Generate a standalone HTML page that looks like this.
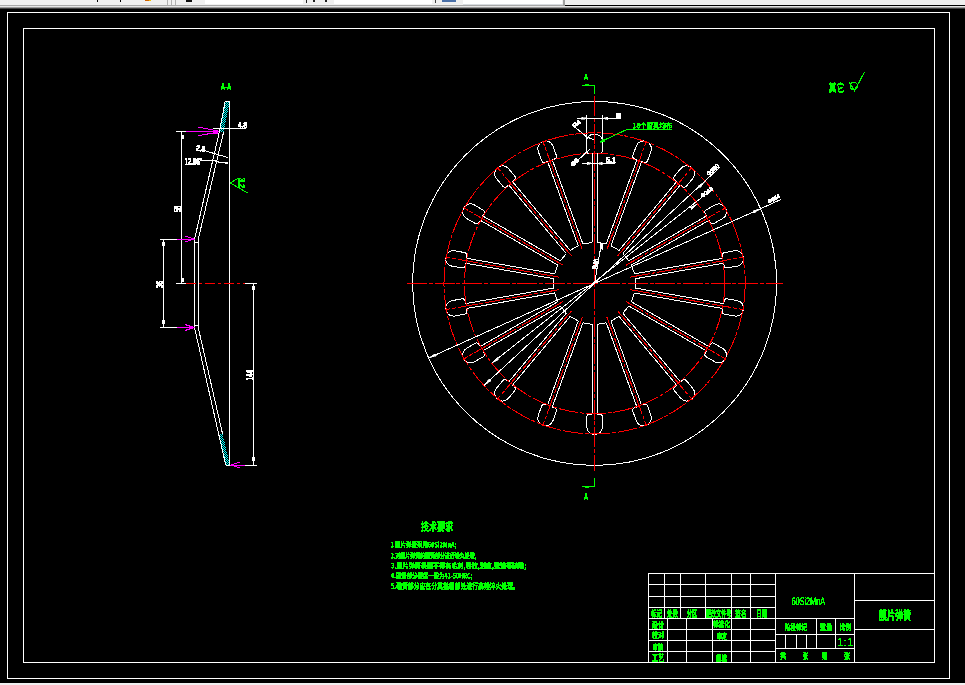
<!DOCTYPE html><html><head><meta charset="utf-8"><style>html,body{margin:0;padding:0;background:#000;width:965px;height:685px;overflow:hidden}</style></head><body><svg width="965" height="685" viewBox="0 0 965 685" style="display:block;will-change:transform" shape-rendering="crispEdges">
<rect x="0" y="0" width="965" height="685" fill="#000"/>
<rect x="0" y="0" width="965" height="5" fill="#f0f0f0"/>
<rect x="0" y="5" width="565" height="1" fill="#a8a8a8"/>
<rect x="0" y="6" width="965" height="1" fill="#e6e6e6"/>
<rect x="0" y="7" width="965" height="1" fill="#9a9a9a"/>
<rect x="0" y="8" width="965" height="1" fill="#404040"/>
<rect x="205" y="0" width="98" height="4" fill="#ffffff"/>
<rect x="334" y="0" width="98" height="4" fill="#ffffff"/>
<rect x="463" y="0" width="99" height="4" fill="#ffffff"/>
<rect x="563" y="0" width="2" height="6" fill="#a0a0a0"/>
<rect x="463" y="4" width="100" height="1" fill="#d8dce0"/>
<rect x="97" y="0" width="1" height="2" fill="#000"/>
<rect x="120" y="0" width="1" height="2" fill="#000"/>
<rect x="145" y="0" width="4" height="1" fill="#d06000"/>
<rect x="149" y="0" width="2" height="1" fill="#f0c000"/>
<rect x="167" y="0" width="1" height="5" fill="#b0b0b0"/>
<rect x="171" y="0" width="1" height="5" fill="#b0b0b0"/>
<rect x="175" y="0" width="1" height="5" fill="#b0b0b0"/>
<rect x="186" y="0" width="6" height="2" fill="#101010"/>
<rect x="306" y="0" width="1" height="3" fill="#202020"/>
<rect x="313" y="0" width="2" height="2" fill="#202020"/>
<rect x="325" y="0" width="2" height="2" fill="#202020"/>
<rect x="435" y="0" width="1" height="3" fill="#404040"/>
<rect x="442" y="0" width="14" height="2" fill="#4a70a8"/>
<rect x="0" y="683" width="965" height="2" fill="#f0f0f0"/>
<rect x="7.5" y="12.5" width="942" height="666" fill="none" stroke="#fff" stroke-width="1"/>
<rect x="23.5" y="28.5" width="911" height="634" fill="none" stroke="#fff" stroke-width="1"/>
<line x1="592.1" y1="242.4" x2="592.1" y2="152.8" stroke="#fff" stroke-width="1" />
<line x1="597.1" y1="242.4" x2="597.1" y2="152.8" stroke="#fff" stroke-width="1" />
<line x1="597.1" y1="242.4" x2="606.27" y2="244.02" stroke="#fff" stroke-width="1" />
<line x1="606.27" y1="244.02" x2="636.92" y2="159.82" stroke="#fff" stroke-width="1" />
<line x1="610.97" y1="245.73" x2="641.62" y2="161.53" stroke="#fff" stroke-width="1" />
<line x1="610.97" y1="245.73" x2="619.04" y2="250.39" stroke="#fff" stroke-width="1" />
<path d="M636.92,159.82 L634.76,159.03 A3,3 0 0 1 632.96,155.19 L636.35,145.89 A7.5,7.5 0 0 1 645.96,141.4 L646.53,141.61 A7.5,7.5 0 0 1 651.01,151.22 L647.62,160.52 A3,3 0 0 1 643.78,162.32 L641.62,161.53" fill="none" stroke="#fff" stroke-width="1"/>
<line x1="619.04" y1="250.39" x2="676.63" y2="181.75" stroke="#fff" stroke-width="1" />
<line x1="622.87" y1="253.6" x2="680.46" y2="184.96" stroke="#fff" stroke-width="1" />
<line x1="622.87" y1="253.6" x2="628.86" y2="260.73" stroke="#fff" stroke-width="1" />
<path d="M676.63,181.75 L674.87,180.27 A3,3 0 0 1 674.5,176.04 L680.86,168.46 A7.5,7.5 0 0 1 691.43,167.53 L691.89,167.92 A7.5,7.5 0 0 1 692.82,178.49 L686.45,186.07 A3,3 0 0 1 682.23,186.44 L680.46,184.96" fill="none" stroke="#fff" stroke-width="1"/>
<line x1="628.86" y1="260.73" x2="706.45" y2="215.93" stroke="#fff" stroke-width="1" />
<line x1="631.36" y1="265.07" x2="708.95" y2="220.27" stroke="#fff" stroke-width="1" />
<line x1="631.36" y1="265.07" x2="634.54" y2="273.82" stroke="#fff" stroke-width="1" />
<path d="M706.45,215.93 L705.3,213.94 A3,3 0 0 1 706.4,209.85 L714.97,204.9 A7.5,7.5 0 0 1 725.22,207.64 L725.52,208.16 A7.5,7.5 0 0 1 722.77,218.4 L714.2,223.35 A3,3 0 0 1 710.1,222.26 L708.95,220.27" fill="none" stroke="#fff" stroke-width="1"/>
<line x1="634.54" y1="273.82" x2="722.78" y2="258.26" stroke="#fff" stroke-width="1" />
<line x1="635.41" y1="278.74" x2="723.65" y2="263.18" stroke="#fff" stroke-width="1" />
<line x1="635.41" y1="278.74" x2="635.41" y2="288.06" stroke="#fff" stroke-width="1" />
<path d="M722.78,258.26 L722.38,255.99 A3,3 0 0 1 724.82,252.52 L734.57,250.8 A7.5,7.5 0 0 1 743.25,256.88 L743.36,257.47 A7.5,7.5 0 0 1 737.27,266.16 L727.52,267.88 A3,3 0 0 1 724.05,265.45 L723.65,263.18" fill="none" stroke="#fff" stroke-width="1"/>
<line x1="635.41" y1="288.06" x2="723.65" y2="303.62" stroke="#fff" stroke-width="1" />
<line x1="634.54" y1="292.98" x2="722.78" y2="308.54" stroke="#fff" stroke-width="1" />
<line x1="634.54" y1="292.98" x2="631.36" y2="301.73" stroke="#fff" stroke-width="1" />
<path d="M723.65,303.62 L724.05,301.35 A3,3 0 0 1 727.52,298.92 L737.27,300.64 A7.5,7.5 0 0 1 743.36,309.33 L743.25,309.92 A7.5,7.5 0 0 1 734.57,316 L724.82,314.28 A3,3 0 0 1 722.38,310.81 L722.78,308.54" fill="none" stroke="#fff" stroke-width="1"/>
<line x1="631.36" y1="301.73" x2="708.95" y2="346.53" stroke="#fff" stroke-width="1" />
<line x1="628.86" y1="306.07" x2="706.45" y2="350.87" stroke="#fff" stroke-width="1" />
<line x1="628.86" y1="306.07" x2="622.87" y2="313.2" stroke="#fff" stroke-width="1" />
<path d="M708.95,346.53 L710.1,344.54 A3,3 0 0 1 714.2,343.45 L722.77,348.4 A7.5,7.5 0 0 1 725.52,358.64 L725.22,359.16 A7.5,7.5 0 0 1 714.97,361.9 L706.4,356.95 A3,3 0 0 1 705.3,352.86 L706.45,350.87" fill="none" stroke="#fff" stroke-width="1"/>
<line x1="622.87" y1="313.2" x2="680.46" y2="381.84" stroke="#fff" stroke-width="1" />
<line x1="619.04" y1="316.41" x2="676.63" y2="385.05" stroke="#fff" stroke-width="1" />
<line x1="619.04" y1="316.41" x2="610.97" y2="321.07" stroke="#fff" stroke-width="1" />
<path d="M680.46,381.84 L682.23,380.36 A3,3 0 0 1 686.45,380.73 L692.82,388.31 A7.5,7.5 0 0 1 691.89,398.88 L691.43,399.27 A7.5,7.5 0 0 1 680.86,398.34 L674.5,390.76 A3,3 0 0 1 674.87,386.53 L676.63,385.05" fill="none" stroke="#fff" stroke-width="1"/>
<line x1="610.97" y1="321.07" x2="641.62" y2="405.27" stroke="#fff" stroke-width="1" />
<line x1="606.27" y1="322.78" x2="636.92" y2="406.98" stroke="#fff" stroke-width="1" />
<line x1="606.27" y1="322.78" x2="597.1" y2="324.4" stroke="#fff" stroke-width="1" />
<path d="M641.62,405.27 L643.78,404.48 A3,3 0 0 1 647.62,406.28 L651.01,415.58 A7.5,7.5 0 0 1 646.53,425.19 L645.96,425.4 A7.5,7.5 0 0 1 636.35,420.91 L632.96,411.61 A3,3 0 0 1 634.76,407.77 L636.92,406.98" fill="none" stroke="#fff" stroke-width="1"/>
<line x1="597.1" y1="324.4" x2="597.1" y2="414" stroke="#fff" stroke-width="1" />
<line x1="592.1" y1="324.4" x2="592.1" y2="414" stroke="#fff" stroke-width="1" />
<line x1="592.1" y1="324.4" x2="582.93" y2="322.78" stroke="#fff" stroke-width="1" />
<path d="M597.1,414 L599.4,414 A3,3 0 0 1 602.4,417 L602.4,426.9 A7.5,7.5 0 0 1 594.9,434.4 L594.3,434.4 A7.5,7.5 0 0 1 586.8,426.9 L586.8,417 A3,3 0 0 1 589.8,414 L592.1,414" fill="none" stroke="#fff" stroke-width="1"/>
<line x1="582.93" y1="322.78" x2="552.28" y2="406.98" stroke="#fff" stroke-width="1" />
<line x1="578.23" y1="321.07" x2="547.58" y2="405.27" stroke="#fff" stroke-width="1" />
<line x1="578.23" y1="321.07" x2="570.16" y2="316.41" stroke="#fff" stroke-width="1" />
<path d="M552.28,406.98 L554.44,407.77 A3,3 0 0 1 556.24,411.61 L552.85,420.91 A7.5,7.5 0 0 1 543.24,425.4 L542.67,425.19 A7.5,7.5 0 0 1 538.19,415.58 L541.58,406.28 A3,3 0 0 1 545.42,404.48 L547.58,405.27" fill="none" stroke="#fff" stroke-width="1"/>
<line x1="570.16" y1="316.41" x2="512.57" y2="385.05" stroke="#fff" stroke-width="1" />
<line x1="566.33" y1="313.2" x2="508.74" y2="381.84" stroke="#fff" stroke-width="1" />
<line x1="566.33" y1="313.2" x2="560.34" y2="306.07" stroke="#fff" stroke-width="1" />
<path d="M512.57,385.05 L514.33,386.53 A3,3 0 0 1 514.7,390.76 L508.34,398.34 A7.5,7.5 0 0 1 497.77,399.27 L497.31,398.88 A7.5,7.5 0 0 1 496.38,388.31 L502.75,380.73 A3,3 0 0 1 506.97,380.36 L508.74,381.84" fill="none" stroke="#fff" stroke-width="1"/>
<line x1="560.34" y1="306.07" x2="482.75" y2="350.87" stroke="#fff" stroke-width="1" />
<line x1="557.84" y1="301.73" x2="480.25" y2="346.53" stroke="#fff" stroke-width="1" />
<line x1="557.84" y1="301.73" x2="554.66" y2="292.98" stroke="#fff" stroke-width="1" />
<path d="M482.75,350.87 L483.9,352.86 A3,3 0 0 1 482.8,356.95 L474.23,361.9 A7.5,7.5 0 0 1 463.98,359.16 L463.68,358.64 A7.5,7.5 0 0 1 466.43,348.4 L475,343.45 A3,3 0 0 1 479.1,344.54 L480.25,346.53" fill="none" stroke="#fff" stroke-width="1"/>
<line x1="554.66" y1="292.98" x2="466.42" y2="308.54" stroke="#fff" stroke-width="1" />
<line x1="553.79" y1="288.06" x2="465.55" y2="303.62" stroke="#fff" stroke-width="1" />
<line x1="553.79" y1="288.06" x2="553.79" y2="278.74" stroke="#fff" stroke-width="1" />
<path d="M466.42,308.54 L466.82,310.81 A3,3 0 0 1 464.38,314.28 L454.63,316 A7.5,7.5 0 0 1 445.95,309.92 L445.84,309.33 A7.5,7.5 0 0 1 451.93,300.64 L461.68,298.92 A3,3 0 0 1 465.15,301.35 L465.55,303.62" fill="none" stroke="#fff" stroke-width="1"/>
<line x1="553.79" y1="278.74" x2="465.55" y2="263.18" stroke="#fff" stroke-width="1" />
<line x1="554.66" y1="273.82" x2="466.42" y2="258.26" stroke="#fff" stroke-width="1" />
<line x1="554.66" y1="273.82" x2="557.84" y2="265.07" stroke="#fff" stroke-width="1" />
<path d="M465.55,263.18 L465.15,265.45 A3,3 0 0 1 461.68,267.88 L451.93,266.16 A7.5,7.5 0 0 1 445.84,257.47 L445.95,256.88 A7.5,7.5 0 0 1 454.63,250.8 L464.38,252.52 A3,3 0 0 1 466.82,255.99 L466.42,258.26" fill="none" stroke="#fff" stroke-width="1"/>
<line x1="557.84" y1="265.07" x2="480.25" y2="220.27" stroke="#fff" stroke-width="1" />
<line x1="560.34" y1="260.73" x2="482.75" y2="215.93" stroke="#fff" stroke-width="1" />
<line x1="560.34" y1="260.73" x2="566.33" y2="253.6" stroke="#fff" stroke-width="1" />
<path d="M480.25,220.27 L479.1,222.26 A3,3 0 0 1 475,223.35 L466.43,218.4 A7.5,7.5 0 0 1 463.68,208.16 L463.98,207.64 A7.5,7.5 0 0 1 474.23,204.9 L482.8,209.85 A3,3 0 0 1 483.9,213.94 L482.75,215.93" fill="none" stroke="#fff" stroke-width="1"/>
<line x1="566.33" y1="253.6" x2="508.74" y2="184.96" stroke="#fff" stroke-width="1" />
<line x1="570.16" y1="250.39" x2="512.57" y2="181.75" stroke="#fff" stroke-width="1" />
<line x1="570.16" y1="250.39" x2="578.23" y2="245.73" stroke="#fff" stroke-width="1" />
<path d="M508.74,184.96 L506.97,186.44 A3,3 0 0 1 502.75,186.07 L496.38,178.49 A7.5,7.5 0 0 1 497.31,167.92 L497.77,167.53 A7.5,7.5 0 0 1 508.34,168.46 L514.7,176.04 A3,3 0 0 1 514.33,180.27 L512.57,181.75" fill="none" stroke="#fff" stroke-width="1"/>
<line x1="578.23" y1="245.73" x2="547.58" y2="161.53" stroke="#fff" stroke-width="1" />
<line x1="582.93" y1="244.02" x2="552.28" y2="159.82" stroke="#fff" stroke-width="1" />
<line x1="582.93" y1="244.02" x2="592.1" y2="242.4" stroke="#fff" stroke-width="1" />
<path d="M547.58,161.53 L545.42,162.32 A3,3 0 0 1 541.58,160.52 L538.19,151.22 A7.5,7.5 0 0 1 542.67,141.61 L543.24,141.4 A7.5,7.5 0 0 1 552.85,145.89 L556.24,155.19 A3,3 0 0 1 554.44,159.03 L552.28,159.82" fill="none" stroke="#fff" stroke-width="1"/>
<path d="M592.5,153.4 L588.5,153.4 Q586.5,153.4 586.5,151 L586.5,133 M602.5,133 L602.5,150 Q602.5,153.4 599.5,153.4 L597.4,153.4" fill="none" stroke="#fff"/>
<path d="M586.8,139 A8.5,8.5 0 0 1 602.2,139" fill="none" stroke="#fff"/>
<circle cx="594.6" cy="283.4" r="182" fill="none" stroke="#fff" stroke-width="1"/>
<circle cx="594.6" cy="283.4" r="150.6" fill="none" stroke="#ff0000" stroke-width="1" stroke-dasharray="20 1.8 4 1.8"/>
<circle cx="594.6" cy="283.4" r="130.2" fill="none" stroke="#ff0000" stroke-width="1" stroke-dasharray="20 1.8 4 1.8"/>
<line x1="407" y1="283.4" x2="783" y2="283.4" stroke="#ff0000" stroke-width="1" stroke-dasharray="20 1.8 4 1.8"/>
<line x1="594.6" y1="96" x2="594.6" y2="470.6" stroke="#ff0000" stroke-width="1" stroke-dasharray="20 1.8 4 1.8"/>
<line x1="606.91" y1="249.57" x2="646.59" y2="140.57" stroke="#ff0000" stroke-width="1" stroke-dasharray="20 1.8 4 1.8"/>
<line x1="617.74" y1="255.82" x2="692.3" y2="166.96" stroke="#ff0000" stroke-width="1" stroke-dasharray="20 1.8 4 1.8"/>
<line x1="625.78" y1="265.4" x2="726.24" y2="207.4" stroke="#ff0000" stroke-width="1" stroke-dasharray="20 1.8 4 1.8"/>
<line x1="630.05" y1="277.15" x2="744.29" y2="257.01" stroke="#ff0000" stroke-width="1" stroke-dasharray="20 1.8 4 1.8"/>
<line x1="630.05" y1="289.65" x2="744.29" y2="309.79" stroke="#ff0000" stroke-width="1" stroke-dasharray="20 1.8 4 1.8"/>
<line x1="625.78" y1="301.4" x2="726.24" y2="359.4" stroke="#ff0000" stroke-width="1" stroke-dasharray="20 1.8 4 1.8"/>
<line x1="617.74" y1="310.98" x2="692.3" y2="399.84" stroke="#ff0000" stroke-width="1" stroke-dasharray="20 1.8 4 1.8"/>
<line x1="606.91" y1="317.23" x2="646.59" y2="426.23" stroke="#ff0000" stroke-width="1" stroke-dasharray="20 1.8 4 1.8"/>
<line x1="582.29" y1="317.23" x2="542.61" y2="426.23" stroke="#ff0000" stroke-width="1" stroke-dasharray="20 1.8 4 1.8"/>
<line x1="571.46" y1="310.98" x2="496.9" y2="399.84" stroke="#ff0000" stroke-width="1" stroke-dasharray="20 1.8 4 1.8"/>
<line x1="563.42" y1="301.4" x2="462.96" y2="359.4" stroke="#ff0000" stroke-width="1" stroke-dasharray="20 1.8 4 1.8"/>
<line x1="559.15" y1="289.65" x2="444.91" y2="309.79" stroke="#ff0000" stroke-width="1" stroke-dasharray="20 1.8 4 1.8"/>
<line x1="559.15" y1="277.15" x2="444.91" y2="257.01" stroke="#ff0000" stroke-width="1" stroke-dasharray="20 1.8 4 1.8"/>
<line x1="563.42" y1="265.4" x2="462.96" y2="207.4" stroke="#ff0000" stroke-width="1" stroke-dasharray="20 1.8 4 1.8"/>
<line x1="571.46" y1="255.82" x2="496.9" y2="166.96" stroke="#ff0000" stroke-width="1" stroke-dasharray="20 1.8 4 1.8"/>
<line x1="582.29" y1="249.57" x2="542.61" y2="140.57" stroke="#ff0000" stroke-width="1" stroke-dasharray="20 1.8 4 1.8"/>
<line x1="428.59" y1="358.01" x2="780.9" y2="199.5" stroke="#fff" stroke-width="1" />
<polygon points="760.61,208.79 753.84,213.26 752.78,210.89" stroke="#fff" stroke-width="0.6" fill="#fff" />
<polygon points="428.59,358.01 435.36,353.54 436.42,355.91" stroke="#fff" stroke-width="0.6" fill="#fff" />
<line x1="484.14" y1="385.33" x2="719.8" y2="167.3" stroke="#fff" stroke-width="1" />
<polygon points="705.06,181.47 700.06,187.85 698.3,185.94" stroke="#fff" stroke-width="0.6" fill="#fff" />
<polygon points="484.14,385.33 489.14,378.95 490.9,380.86" stroke="#fff" stroke-width="0.6" fill="#fff" />
<line x1="491.72" y1="363.2" x2="713" y2="188.5" stroke="#fff" stroke-width="1" />
<polygon points="697.48,203.6 691.95,209.53 690.36,207.48" stroke="#fff" stroke-width="0.6" fill="#fff" />
<polygon points="491.72,363.2 497.25,357.27 498.84,359.32" stroke="#fff" stroke-width="0.6" fill="#fff" />
<g fill="#fff"><rect x="777" y="194" width="2" height="1"/><rect x="775" y="195" width="1" height="1"/><rect x="777" y="195" width="2" height="1"/><rect x="774" y="196" width="2" height="1"/><rect x="777" y="196" width="3" height="1"/><rect x="772" y="197" width="8" height="1"/><rect x="771" y="198" width="7" height="1"/><rect x="768" y="199" width="9" height="1"/><rect x="768" y="200" width="7" height="1"/><rect x="768" y="201" width="4" height="1"/><rect x="773" y="201" width="1" height="1"/><rect x="768" y="202" width="3" height="1"/></g>
<g fill="#fff"><rect x="715" y="164" width="3" height="1"/><rect x="715" y="165" width="1" height="1"/><rect x="717" y="165" width="2" height="1"/><rect x="713" y="166" width="4" height="1"/><rect x="718" y="166" width="1" height="1"/><rect x="712" y="167" width="7" height="1"/><rect x="711" y="168" width="6" height="1"/><rect x="710" y="169" width="7" height="1"/><rect x="710" y="170" width="5" height="1"/><rect x="707" y="171" width="4" height="1"/><rect x="712" y="171" width="2" height="1"/><rect x="707" y="172" width="6" height="1"/><rect x="707" y="173" width="1" height="1"/><rect x="709" y="173" width="2" height="1"/><rect x="707" y="174" width="4" height="1"/></g>
<g fill="#fff"><rect x="709" y="187" width="3" height="1"/><rect x="709" y="188" width="4" height="1"/><rect x="707" y="189" width="2" height="1"/><rect x="710" y="189" width="3" height="1"/><rect x="707" y="190" width="6" height="1"/><rect x="704" y="191" width="7" height="1"/><rect x="704" y="192" width="1" height="1"/><rect x="706" y="192" width="1" height="1"/><rect x="708" y="192" width="2" height="1"/><rect x="701" y="193" width="4" height="1"/><rect x="706" y="193" width="3" height="1"/><rect x="701" y="194" width="7" height="1"/><rect x="701" y="195" width="4" height="1"/><rect x="701" y="196" width="4" height="1"/></g>
<line x1="594.6" y1="283.4" x2="601.3" y2="243.9" stroke="#fff" stroke-width="1" />
<g fill="#fff"><rect x="594" y="259" width="5" height="1"/><rect x="593" y="260" width="3" height="1"/><rect x="598" y="260" width="1" height="1"/><rect x="594" y="261" width="5" height="1"/><rect x="593" y="262" width="5" height="1"/><rect x="593" y="263" width="6" height="1"/><rect x="595" y="264" width="2" height="1"/><rect x="593" y="265" width="5" height="1"/><rect x="592" y="266" width="6" height="1"/><rect x="592" y="267" width="4" height="1"/><rect x="592" y="268" width="5" height="1"/></g>
<g fill="#fff"><rect x="600" y="243" width="2" height="1"/><rect x="600" y="244" width="3" height="1"/><rect x="600" y="245" width="3" height="1"/><rect x="600" y="246" width="3" height="1"/><rect x="600" y="247" width="3" height="1"/><rect x="600" y="248" width="3" height="1"/><rect x="602" y="249" width="1" height="1"/></g>
<line x1="586.5" y1="115" x2="586.5" y2="133.2" stroke="#fff" stroke-width="1" />
<line x1="602.8" y1="115" x2="602.8" y2="133.2" stroke="#fff" stroke-width="1" />
<line x1="577.3" y1="118.4" x2="616" y2="118.4" stroke="#fff" stroke-width="1" />
<polygon points="586.5,118.4 581.5,119.7 581.5,117.1" stroke="#fff" stroke-width="0.6" fill="#fff" />
<polygon points="602.8,118.4 607.8,117.1 607.8,119.7" stroke="#fff" stroke-width="0.6" fill="#fff" />
<rect x="616" y="113" width="5" height="6" fill="#fff"/>
<line x1="582.4" y1="163.4" x2="615" y2="163.4" stroke="#fff" stroke-width="1" />
<line x1="592.1" y1="152.7" x2="592.1" y2="166" stroke="#fff" stroke-width="1" />
<line x1="597.1" y1="152.7" x2="597.1" y2="166" stroke="#fff" stroke-width="1" />
<polygon points="592.1,163.4 587.1,164.7 587.1,162.1" stroke="#fff" stroke-width="0.6" fill="#fff" />
<polygon points="597.1,163.4 602.1,162.1 602.1,164.7" stroke="#fff" stroke-width="0.6" fill="#fff" />
<g fill="#fff"><rect x="606" y="157" width="4" height="1"/><rect x="613" y="157" width="2" height="1"/><rect x="606" y="158" width="2" height="1"/><rect x="612" y="158" width="3" height="1"/><rect x="606" y="159" width="4" height="1"/><rect x="613" y="159" width="2" height="1"/><rect x="606" y="160" width="1" height="1"/><rect x="608" y="160" width="2" height="1"/><rect x="613" y="160" width="2" height="1"/><rect x="606" y="161" width="6" height="1"/><rect x="613" y="161" width="2" height="1"/><rect x="606" y="162" width="10" height="1"/></g>
<g fill="#fff"><rect x="577" y="120" width="2" height="1"/><rect x="577" y="121" width="3" height="1"/><rect x="574" y="122" width="2" height="1"/><rect x="577" y="122" width="4" height="1"/><rect x="573" y="123" width="8" height="1"/><rect x="572" y="124" width="2" height="1"/><rect x="575" y="124" width="4" height="1"/><rect x="572" y="125" width="6" height="1"/><rect x="573" y="126" width="3" height="1"/><rect x="574" y="127" width="2" height="1"/></g>
<polyline points="576,128 586.6,136.8 593.8,139.8" stroke="#fff" stroke-width="1" fill="none" />
<g fill="#fff"><rect x="575" y="158" width="2" height="1"/><rect x="574" y="159" width="5" height="1"/><rect x="574" y="160" width="5" height="1"/><rect x="572" y="161" width="7" height="1"/><rect x="571" y="162" width="7" height="1"/><rect x="571" y="163" width="5" height="1"/><rect x="571" y="164" width="5" height="1"/><rect x="571" y="165" width="4" height="1"/></g>
<line x1="577" y1="161" x2="590" y2="149" stroke="#fff" stroke-width="1" />
<line x1="599.6" y1="142.3" x2="627.2" y2="129.3" stroke="#00ff00" stroke-width="1" />
<line x1="627.2" y1="129.5" x2="671.9" y2="129.5" stroke="#00ff00" stroke-width="1" />
<polygon points="599.6,142.3 603.48,138.81 604.76,141.53" stroke="#00ff00" stroke-width="0.6" fill="#00ff00" />
<g fill="#00ff00"><rect x="643" y="122" width="1" height="1"/><rect x="647" y="122" width="11" height="1"/><rect x="660" y="122" width="1" height="1"/><rect x="663" y="122" width="1" height="1"/><rect x="668" y="122" width="1" height="1"/><rect x="633" y="123" width="2" height="1"/><rect x="637" y="123" width="3" height="1"/><rect x="642" y="123" width="3" height="1"/><rect x="647" y="123" width="6" height="1"/><rect x="654" y="123" width="4" height="1"/><rect x="660" y="123" width="12" height="1"/><rect x="634" y="124" width="1" height="1"/><rect x="637" y="124" width="9" height="1"/><rect x="647" y="124" width="3" height="1"/><rect x="651" y="124" width="2" height="1"/><rect x="654" y="124" width="4" height="1"/><rect x="659" y="124" width="4" height="1"/><rect x="664" y="124" width="2" height="1"/><rect x="667" y="124" width="3" height="1"/><rect x="634" y="125" width="1" height="1"/><rect x="637" y="125" width="4" height="1"/><rect x="643" y="125" width="1" height="1"/><rect x="645" y="125" width="1" height="1"/><rect x="647" y="125" width="5" height="1"/><rect x="654" y="125" width="4" height="1"/><rect x="660" y="125" width="1" height="1"/><rect x="663" y="125" width="9" height="1"/><rect x="634" y="126" width="1" height="1"/><rect x="636" y="126" width="2" height="1"/><rect x="639" y="126" width="1" height="1"/><rect x="643" y="126" width="1" height="1"/><rect x="647" y="126" width="5" height="1"/><rect x="653" y="126" width="5" height="1"/><rect x="660" y="126" width="2" height="1"/><rect x="663" y="126" width="5" height="1"/><rect x="669" y="126" width="1" height="1"/><rect x="671" y="126" width="1" height="1"/><rect x="633" y="127" width="3" height="1"/><rect x="637" y="127" width="3" height="1"/><rect x="643" y="127" width="1" height="1"/><rect x="647" y="127" width="5" height="1"/><rect x="654" y="127" width="7" height="1"/><rect x="662" y="127" width="4" height="1"/><rect x="667" y="127" width="1" height="1"/><rect x="669" y="127" width="3" height="1"/><rect x="633" y="128" width="2" height="1"/><rect x="638" y="128" width="1" height="1"/><rect x="643" y="128" width="1" height="1"/><rect x="647" y="128" width="5" height="1"/><rect x="653" y="128" width="2" height="1"/><rect x="657" y="128" width="2" height="1"/><rect x="663" y="128" width="2" height="1"/><rect x="667" y="128" width="1" height="1"/><rect x="669" y="128" width="1" height="1"/></g>
<line x1="582" y1="85.4" x2="594.8" y2="85.4" stroke="#00ff00" stroke-width="1" />
<line x1="594.8" y1="85.4" x2="594.8" y2="93.9" stroke="#00ff00" stroke-width="1" />
<rect x="585" y="84" width="4" height="1.5" fill="#00ff00"/>
<g fill="#00ff00"><rect x="585" y="74" width="2" height="1"/><rect x="585" y="75" width="2" height="1"/><rect x="585" y="76" width="2" height="1"/><rect x="584" y="77" width="4" height="1"/><rect x="584" y="78" width="4" height="1"/><rect x="584" y="79" width="1" height="1"/><rect x="587" y="79" width="1" height="1"/></g>
<line x1="582" y1="486.5" x2="594.5" y2="486.5" stroke="#00ff00" stroke-width="1" />
<line x1="594.5" y1="478.3" x2="594.5" y2="486.5" stroke="#00ff00" stroke-width="1" />
<rect x="585" y="486.5" width="4" height="1.5" fill="#00ff00"/>
<g fill="#00ff00"><rect x="585" y="493" width="2" height="1"/><rect x="585" y="494" width="2" height="1"/><rect x="585" y="495" width="2" height="1"/><rect x="585" y="496" width="2" height="1"/><rect x="584" y="497" width="4" height="1"/><rect x="584" y="498" width="4" height="1"/><rect x="584" y="499" width="1" height="1"/><rect x="587" y="499" width="1" height="1"/></g>
<defs><pattern id="hat" width="2" height="2" patternUnits="userSpaceOnUse"><rect width="2" height="2" fill="#000"/><rect width="1" height="1" fill="#00ffff"/><rect x="1" y="1" width="1" height="1" fill="#00ffff"/></pattern></defs>
<polygon points="225.2,101.3 229.8,101.3 223.6,132 219.3,132" stroke="none" stroke-width="0" fill="url(#hat)" />
<line x1="225.2" y1="101.3" x2="229.8" y2="101.3" stroke="#fff" stroke-width="1" />
<line x1="225.2" y1="101.3" x2="219.3" y2="132" stroke="#fff" stroke-width="1" />
<polygon points="218.66,434 222.59,434 229.7,465 225.7,465" stroke="none" stroke-width="0" fill="url(#hat)" />
<line x1="218.66" y1="434" x2="225.7" y2="465" stroke="#fff" stroke-width="1" />
<line x1="225.7" y1="465" x2="229.8" y2="465" stroke="#fff" stroke-width="1" />
<line x1="219.3" y1="132" x2="194.6" y2="239" stroke="#fff" stroke-width="1" />
<line x1="223.6" y1="132" x2="198.3" y2="239" stroke="#fff" stroke-width="1" />
<line x1="194.6" y1="239" x2="194.6" y2="328" stroke="#fff" stroke-width="1" />
<line x1="198.3" y1="239" x2="198.3" y2="328" stroke="#fff" stroke-width="1" />
<line x1="194.6" y1="242" x2="198.3" y2="242" stroke="#fff" stroke-width="1" />
<line x1="194.6" y1="325" x2="198.3" y2="325" stroke="#fff" stroke-width="1" />
<line x1="194.6" y1="328" x2="218.66" y2="434" stroke="#fff" stroke-width="1" />
<line x1="198.3" y1="328" x2="222.59" y2="434" stroke="#fff" stroke-width="1" />
<line x1="229.8" y1="101.3" x2="229.8" y2="465" stroke="#fff" stroke-width="1" />
<line x1="213.4" y1="128.4" x2="246.2" y2="128.4" stroke="#fff" stroke-width="1" />
<g fill="#fff"><rect x="239" y="122" width="2" height="1"/><rect x="244" y="122" width="3" height="1"/><rect x="239" y="123" width="2" height="1"/><rect x="243" y="123" width="4" height="1"/><rect x="238" y="124" width="3" height="1"/><rect x="244" y="124" width="3" height="1"/><rect x="238" y="125" width="3" height="1"/><rect x="243" y="125" width="4" height="1"/><rect x="238" y="126" width="7" height="1"/><rect x="246" y="126" width="1" height="1"/><rect x="240" y="127" width="1" height="1"/><rect x="242" y="127" width="1" height="1"/><rect x="244" y="127" width="3" height="1"/></g>
<line x1="176" y1="131.5" x2="186" y2="131.5" stroke="#fff" stroke-width="1" />
<line x1="186" y1="131.5" x2="219" y2="131.5" stroke="#ff00ff" stroke-width="1" />
<line x1="198.3" y1="127" x2="213.4" y2="130" stroke="#ff00ff" stroke-width="1" />
<line x1="198.3" y1="135.6" x2="213.4" y2="133" stroke="#ff00ff" stroke-width="1" />
<rect x="213" y="129.5" width="5" height="4" fill="#ff00ff"/>
<line x1="181.8" y1="131.5" x2="181.8" y2="283.4" stroke="#fff" stroke-width="1" />
<rect x="181" y="135" width="3" height="4" fill="#fff"/>
<rect x="181" y="278" width="3" height="4" fill="#fff"/>
<line x1="160" y1="239" x2="177" y2="239" stroke="#fff" stroke-width="1" />
<line x1="177" y1="239" x2="195" y2="239" stroke="#ff00ff" stroke-width="1" />
<line x1="185" y1="236" x2="194" y2="239" stroke="#ff00ff" stroke-width="1" />
<line x1="185" y1="242" x2="194" y2="239" stroke="#ff00ff" stroke-width="1" />
<line x1="160" y1="327.5" x2="177" y2="327.5" stroke="#fff" stroke-width="1" />
<line x1="177" y1="327.5" x2="195" y2="327.5" stroke="#ff00ff" stroke-width="1" />
<line x1="185" y1="324.5" x2="194" y2="327.5" stroke="#ff00ff" stroke-width="1" />
<line x1="185" y1="330.5" x2="194" y2="327.5" stroke="#ff00ff" stroke-width="1" />
<line x1="163.3" y1="239" x2="163.3" y2="327.5" stroke="#fff" stroke-width="1" />
<rect x="162" y="242" width="3" height="4" fill="#fff"/>
<rect x="162" y="320" width="3" height="4" fill="#fff"/>
<line x1="229.7" y1="465" x2="245" y2="465" stroke="#ff00ff" stroke-width="1" />
<line x1="245" y1="465" x2="257" y2="465" stroke="#fff" stroke-width="1" />
<line x1="231" y1="465" x2="240" y2="462" stroke="#ff00ff" stroke-width="1" />
<line x1="231" y1="465" x2="240" y2="468" stroke="#ff00ff" stroke-width="1" />
<line x1="253.3" y1="283.4" x2="253.3" y2="465" stroke="#fff" stroke-width="1" />
<rect x="252" y="286" width="3" height="4" fill="#fff"/>
<rect x="252" y="457" width="3" height="4" fill="#fff"/>
<line x1="176" y1="283.4" x2="186" y2="283.4" stroke="#fff" stroke-width="1" />
<line x1="245" y1="283.4" x2="257" y2="283.4" stroke="#fff" stroke-width="1" />
<line x1="185.8" y1="283.4" x2="245" y2="283.4" stroke="#ff0000" stroke-width="1" stroke-dasharray="10 3 3 3"/>
<g fill="#fff"><rect x="174" y="206" width="7" height="1"/><rect x="174" y="207" width="4" height="1"/><rect x="180" y="207" width="1" height="1"/><rect x="174" y="208" width="7" height="1"/><rect x="174" y="209" width="1" height="1"/><rect x="176" y="209" width="5" height="1"/><rect x="174" y="210" width="1" height="1"/><rect x="176" y="210" width="2" height="1"/><rect x="179" y="210" width="2" height="1"/><rect x="174" y="211" width="4" height="1"/><rect x="179" y="211" width="2" height="1"/></g>
<g fill="#fff"><rect x="156" y="281" width="2" height="1"/><rect x="159" y="281" width="4" height="1"/><rect x="156" y="282" width="4" height="1"/><rect x="161" y="282" width="2" height="1"/><rect x="156" y="283" width="7" height="1"/><rect x="157" y="284" width="5" height="1"/><rect x="156" y="285" width="7" height="1"/><rect x="156" y="286" width="2" height="1"/><rect x="159" y="286" width="1" height="1"/><rect x="161" y="286" width="2" height="1"/><rect x="156" y="287" width="2" height="1"/><rect x="161" y="287" width="2" height="1"/></g>
<g fill="#fff"><rect x="246" y="370" width="7" height="1"/><rect x="246" y="371" width="7" height="1"/><rect x="247" y="372" width="5" height="1"/><rect x="250" y="373" width="2" height="1"/><rect x="246" y="374" width="7" height="1"/><rect x="246" y="375" width="6" height="1"/><rect x="249" y="376" width="3" height="1"/><rect x="252" y="377" width="1" height="1"/><rect x="246" y="378" width="7" height="1"/><rect x="246" y="379" width="2" height="1"/><rect x="252" y="379" width="1" height="1"/></g>
<g fill="#fff"><rect x="197" y="145" width="3" height="1"/><rect x="196" y="146" width="4" height="1"/><rect x="202" y="146" width="3" height="1"/><rect x="198" y="147" width="2" height="1"/><rect x="202" y="147" width="3" height="1"/><rect x="196" y="148" width="3" height="1"/><rect x="202" y="148" width="3" height="1"/><rect x="196" y="149" width="2" height="1"/><rect x="201" y="149" width="4" height="1"/><rect x="196" y="150" width="9" height="1"/><rect x="200" y="151" width="1" height="1"/><rect x="202" y="151" width="3" height="1"/></g>
<line x1="204" y1="150.5" x2="227.8" y2="157.5" stroke="#fff" stroke-width="1" />
<g fill="#fff"><rect x="185" y="158" width="2" height="1"/><rect x="188" y="158" width="3" height="1"/><rect x="193" y="158" width="3" height="1"/><rect x="197" y="158" width="5" height="1"/><rect x="185" y="159" width="2" height="1"/><rect x="188" y="159" width="3" height="1"/><rect x="193" y="159" width="9" height="1"/><rect x="186" y="160" width="1" height="1"/><rect x="190" y="160" width="1" height="1"/><rect x="193" y="160" width="6" height="1"/><rect x="200" y="160" width="2" height="1"/><rect x="186" y="161" width="1" height="1"/><rect x="189" y="161" width="2" height="1"/><rect x="193" y="161" width="7" height="1"/><rect x="186" y="162" width="1" height="1"/><rect x="188" y="162" width="2" height="1"/><rect x="193" y="162" width="7" height="1"/><rect x="186" y="163" width="1" height="1"/><rect x="188" y="163" width="12" height="1"/><rect x="185" y="164" width="11" height="1"/><rect x="197" y="164" width="3" height="1"/></g>
<line x1="202" y1="160.2" x2="214" y2="160.2" stroke="#fff" stroke-width="1" />
<path d="M214,160.5 Q221,163.5 228,163" fill="none" stroke="#fff" stroke-width="1.2"/>
<polyline points="238,178.4 230.2,182.9 247.7,193.1" stroke="#00ff00" stroke-width="1" fill="none" />
<line x1="238" y1="178.4" x2="238" y2="187.6" stroke="#00ff00" stroke-width="1" />
<g fill="#00ff00"><rect x="239" y="178" width="2" height="1"/><rect x="243" y="178" width="2" height="1"/><rect x="239" y="179" width="1" height="1"/><rect x="241" y="179" width="2" height="1"/><rect x="244" y="179" width="1" height="1"/><rect x="239" y="180" width="6" height="1"/><rect x="239" y="181" width="6" height="1"/><rect x="239" y="182" width="1" height="1"/><rect x="239" y="183" width="1" height="1"/><rect x="239" y="184" width="2" height="1"/><rect x="243" y="184" width="1" height="1"/><rect x="239" y="185" width="3" height="1"/><rect x="243" y="185" width="2" height="1"/><rect x="239" y="186" width="1" height="1"/><rect x="241" y="186" width="4" height="1"/><rect x="239" y="187" width="1" height="1"/><rect x="242" y="187" width="3" height="1"/></g>
<g fill="#00ff00"><rect x="222" y="83" width="2" height="1"/><rect x="228" y="83" width="2" height="1"/><rect x="222" y="84" width="2" height="1"/><rect x="228" y="84" width="2" height="1"/><rect x="222" y="85" width="2" height="1"/><rect x="228" y="85" width="2" height="1"/><rect x="221" y="86" width="3" height="1"/><rect x="228" y="86" width="3" height="1"/><rect x="221" y="87" width="10" height="1"/><rect x="221" y="88" width="4" height="1"/><rect x="227" y="88" width="4" height="1"/><rect x="221" y="89" width="1" height="1"/><rect x="224" y="89" width="1" height="1"/><rect x="227" y="89" width="1" height="1"/><rect x="230" y="89" width="1" height="1"/></g>
<g fill="#00ff00"><rect x="830" y="82" width="1" height="1"/><rect x="834" y="82" width="1" height="1"/><rect x="840" y="82" width="1" height="1"/><rect x="829" y="83" width="7" height="1"/><rect x="838" y="83" width="5" height="1"/><rect x="829" y="84" width="7" height="1"/><rect x="837" y="84" width="7" height="1"/><rect x="830" y="85" width="5" height="1"/><rect x="837" y="85" width="1" height="1"/><rect x="843" y="85" width="1" height="1"/><rect x="830" y="86" width="5" height="1"/><rect x="838" y="86" width="1" height="1"/><rect x="830" y="87" width="5" height="1"/><rect x="838" y="87" width="1" height="1"/><rect x="840" y="87" width="3" height="1"/><rect x="830" y="88" width="5" height="1"/><rect x="838" y="88" width="4" height="1"/><rect x="829" y="89" width="7" height="1"/><rect x="838" y="89" width="2" height="1"/><rect x="829" y="90" width="7" height="1"/><rect x="838" y="90" width="1" height="1"/><rect x="843" y="90" width="1" height="1"/><rect x="829" y="91" width="3" height="1"/><rect x="833" y="91" width="3" height="1"/><rect x="838" y="91" width="6" height="1"/><rect x="829" y="92" width="2" height="1"/><rect x="835" y="92" width="1" height="1"/><rect x="839" y="92" width="4" height="1"/></g>
<polyline points="849.4,82.3 854.4,90.7 864.6,72" fill="none" stroke="#00ff00" stroke-width="1.2"/>
<circle cx="853.8" cy="86" r="3.7" fill="none" stroke="#00ff00" stroke-width="1.2"/>
<g fill="#00ff00"><rect x="422" y="521" width="1" height="1"/><rect x="425" y="521" width="2" height="1"/><rect x="432" y="521" width="3" height="1"/><rect x="437" y="521" width="8" height="1"/><rect x="448" y="521" width="4" height="1"/><rect x="422" y="522" width="1" height="1"/><rect x="424" y="522" width="4" height="1"/><rect x="432" y="522" width="4" height="1"/><rect x="437" y="522" width="8" height="1"/><rect x="446" y="522" width="7" height="1"/><rect x="421" y="523" width="8" height="1"/><rect x="432" y="523" width="2" height="1"/><rect x="435" y="523" width="1" height="1"/><rect x="438" y="523" width="15" height="1"/><rect x="421" y="524" width="3" height="1"/><rect x="425" y="524" width="2" height="1"/><rect x="429" y="524" width="8" height="1"/><rect x="438" y="524" width="7" height="1"/><rect x="446" y="524" width="1" height="1"/><rect x="448" y="524" width="2" height="1"/><rect x="451" y="524" width="1" height="1"/><rect x="422" y="525" width="1" height="1"/><rect x="424" y="525" width="4" height="1"/><rect x="430" y="525" width="6" height="1"/><rect x="438" y="525" width="7" height="1"/><rect x="446" y="525" width="4" height="1"/><rect x="451" y="525" width="2" height="1"/><rect x="422" y="526" width="7" height="1"/><rect x="431" y="526" width="4" height="1"/><rect x="438" y="526" width="7" height="1"/><rect x="446" y="526" width="6" height="1"/><rect x="421" y="527" width="5" height="1"/><rect x="427" y="527" width="1" height="1"/><rect x="431" y="527" width="5" height="1"/><rect x="437" y="527" width="8" height="1"/><rect x="447" y="527" width="5" height="1"/><rect x="422" y="528" width="1" height="1"/><rect x="425" y="528" width="3" height="1"/><rect x="430" y="528" width="6" height="1"/><rect x="437" y="528" width="8" height="1"/><rect x="446" y="528" width="6" height="1"/><rect x="422" y="529" width="1" height="1"/><rect x="425" y="529" width="2" height="1"/><rect x="429" y="529" width="2" height="1"/><rect x="432" y="529" width="2" height="1"/><rect x="435" y="529" width="2" height="1"/><rect x="438" y="529" width="5" height="1"/><rect x="445" y="529" width="5" height="1"/><rect x="451" y="529" width="2" height="1"/><rect x="421" y="530" width="10" height="1"/><rect x="432" y="530" width="2" height="1"/><rect x="438" y="530" width="6" height="1"/><rect x="446" y="530" width="4" height="1"/><rect x="451" y="530" width="2" height="1"/><rect x="421" y="531" width="2" height="1"/><rect x="424" y="531" width="1" height="1"/><rect x="427" y="531" width="2" height="1"/><rect x="432" y="531" width="2" height="1"/><rect x="437" y="531" width="4" height="1"/><rect x="442" y="531" width="2" height="1"/><rect x="447" y="531" width="3" height="1"/></g>
<g fill="#00ff00"><rect x="395" y="541" width="5" height="1"/><rect x="401" y="541" width="1" height="1"/><rect x="403" y="541" width="1" height="1"/><rect x="406" y="541" width="3" height="1"/><rect x="410" y="541" width="1" height="1"/><rect x="412" y="541" width="10" height="1"/><rect x="423" y="541" width="4" height="1"/><rect x="438" y="541" width="1" height="1"/><rect x="391" y="542" width="2" height="1"/><rect x="395" y="542" width="5" height="1"/><rect x="401" y="542" width="1" height="1"/><rect x="403" y="542" width="1" height="1"/><rect x="407" y="542" width="4" height="1"/><rect x="412" y="542" width="4" height="1"/><rect x="417" y="542" width="3" height="1"/><rect x="421" y="542" width="1" height="1"/><rect x="423" y="542" width="8" height="1"/><rect x="432" y="542" width="2" height="1"/><rect x="435" y="542" width="4" height="1"/><rect x="440" y="542" width="2" height="1"/><rect x="443" y="542" width="2" height="1"/><rect x="446" y="542" width="1" height="1"/><rect x="452" y="542" width="2" height="1"/><rect x="392" y="543" width="1" height="1"/><rect x="395" y="543" width="5" height="1"/><rect x="401" y="543" width="10" height="1"/><rect x="412" y="543" width="5" height="1"/><rect x="418" y="543" width="4" height="1"/><rect x="423" y="543" width="6" height="1"/><rect x="431" y="543" width="5" height="1"/><rect x="438" y="543" width="1" height="1"/><rect x="441" y="543" width="6" height="1"/><rect x="448" y="543" width="3" height="1"/><rect x="452" y="543" width="2" height="1"/><rect x="455" y="543" width="1" height="1"/><rect x="392" y="544" width="1" height="1"/><rect x="395" y="544" width="5" height="1"/><rect x="401" y="544" width="2" height="1"/><rect x="406" y="544" width="16" height="1"/><rect x="423" y="544" width="11" height="1"/><rect x="435" y="544" width="2" height="1"/><rect x="438" y="544" width="1" height="1"/><rect x="441" y="544" width="1" height="1"/><rect x="443" y="544" width="4" height="1"/><rect x="448" y="544" width="6" height="1"/><rect x="455" y="544" width="1" height="1"/><rect x="392" y="545" width="1" height="1"/><rect x="395" y="545" width="5" height="1"/><rect x="401" y="545" width="4" height="1"/><rect x="406" y="545" width="5" height="1"/><rect x="412" y="545" width="4" height="1"/><rect x="417" y="545" width="5" height="1"/><rect x="423" y="545" width="6" height="1"/><rect x="430" y="545" width="4" height="1"/><rect x="436" y="545" width="3" height="1"/><rect x="440" y="545" width="2" height="1"/><rect x="443" y="545" width="4" height="1"/><rect x="448" y="545" width="6" height="1"/><rect x="391" y="546" width="3" height="1"/><rect x="395" y="546" width="5" height="1"/><rect x="401" y="546" width="1" height="1"/><rect x="404" y="546" width="1" height="1"/><rect x="407" y="546" width="9" height="1"/><rect x="418" y="546" width="4" height="1"/><rect x="423" y="546" width="1" height="1"/><rect x="425" y="546" width="9" height="1"/><rect x="435" y="546" width="4" height="1"/><rect x="440" y="546" width="7" height="1"/><rect x="448" y="546" width="4" height="1"/><rect x="453" y="546" width="3" height="1"/><rect x="391" y="547" width="2" height="1"/><rect x="395" y="547" width="7" height="1"/><rect x="404" y="547" width="1" height="1"/><rect x="406" y="547" width="2" height="1"/><rect x="409" y="547" width="1" height="1"/><rect x="412" y="547" width="6" height="1"/><rect x="419" y="547" width="1" height="1"/><rect x="421" y="547" width="3" height="1"/><rect x="425" y="547" width="3" height="1"/><rect x="429" y="547" width="1" height="1"/><rect x="432" y="547" width="1" height="1"/><rect x="435" y="547" width="2" height="1"/><rect x="438" y="547" width="1" height="1"/><rect x="440" y="547" width="2" height="1"/><rect x="443" y="547" width="1" height="1"/><rect x="446" y="547" width="1" height="1"/><rect x="448" y="547" width="1" height="1"/><rect x="450" y="547" width="2" height="1"/><rect x="455" y="547" width="1" height="1"/><rect x="455" y="548" width="1" height="1"/></g>
<g fill="#00ff00"><rect x="399" y="552" width="1" height="1"/><rect x="401" y="552" width="4" height="1"/><rect x="406" y="552" width="1" height="1"/><rect x="408" y="552" width="1" height="1"/><rect x="410" y="552" width="3" height="1"/><rect x="414" y="552" width="1" height="1"/><rect x="416" y="552" width="4" height="1"/><rect x="421" y="552" width="1" height="1"/><rect x="423" y="552" width="1" height="1"/><rect x="425" y="552" width="10" height="1"/><rect x="436" y="552" width="1" height="1"/><rect x="438" y="552" width="2" height="1"/><rect x="441" y="552" width="1" height="1"/><rect x="443" y="552" width="1" height="1"/><rect x="445" y="552" width="1" height="1"/><rect x="447" y="552" width="2" height="1"/><rect x="451" y="552" width="5" height="1"/><rect x="457" y="552" width="2" height="1"/><rect x="461" y="552" width="1" height="1"/><rect x="465" y="552" width="1" height="1"/><rect x="467" y="552" width="2" height="1"/><rect x="470" y="552" width="4" height="1"/><rect x="391" y="553" width="2" height="1"/><rect x="395" y="553" width="10" height="1"/><rect x="406" y="553" width="1" height="1"/><rect x="408" y="553" width="1" height="1"/><rect x="411" y="553" width="23" height="1"/><rect x="435" y="553" width="5" height="1"/><rect x="441" y="553" width="1" height="1"/><rect x="443" y="553" width="1" height="1"/><rect x="445" y="553" width="6" height="1"/><rect x="452" y="553" width="2" height="1"/><rect x="455" y="553" width="4" height="1"/><rect x="460" y="553" width="3" height="1"/><rect x="465" y="553" width="4" height="1"/><rect x="470" y="553" width="5" height="1"/><rect x="392" y="554" width="2" height="1"/><rect x="397" y="554" width="8" height="1"/><rect x="406" y="554" width="17" height="1"/><rect x="424" y="554" width="18" height="1"/><rect x="443" y="554" width="2" height="1"/><rect x="447" y="554" width="2" height="1"/><rect x="450" y="554" width="14" height="1"/><rect x="465" y="554" width="4" height="1"/><rect x="470" y="554" width="5" height="1"/><rect x="392" y="555" width="1" height="1"/><rect x="396" y="555" width="9" height="1"/><rect x="406" y="555" width="1" height="1"/><rect x="410" y="555" width="52" height="1"/><rect x="463" y="555" width="1" height="1"/><rect x="465" y="555" width="10" height="1"/><rect x="392" y="556" width="1" height="1"/><rect x="396" y="556" width="9" height="1"/><rect x="406" y="556" width="3" height="1"/><rect x="410" y="556" width="5" height="1"/><rect x="416" y="556" width="14" height="1"/><rect x="431" y="556" width="9" height="1"/><rect x="441" y="556" width="3" height="1"/><rect x="445" y="556" width="4" height="1"/><rect x="450" y="556" width="2" height="1"/><rect x="453" y="556" width="1" height="1"/><rect x="455" y="556" width="5" height="1"/><rect x="461" y="556" width="3" height="1"/><rect x="465" y="556" width="4" height="1"/><rect x="470" y="556" width="4" height="1"/><rect x="391" y="557" width="4" height="1"/><rect x="396" y="557" width="2" height="1"/><rect x="399" y="557" width="8" height="1"/><rect x="408" y="557" width="1" height="1"/><rect x="411" y="557" width="4" height="1"/><rect x="416" y="557" width="7" height="1"/><rect x="424" y="557" width="6" height="1"/><rect x="431" y="557" width="5" height="1"/><rect x="437" y="557" width="3" height="1"/><rect x="441" y="557" width="1" height="1"/><rect x="443" y="557" width="1" height="1"/><rect x="445" y="557" width="4" height="1"/><rect x="450" y="557" width="2" height="1"/><rect x="453" y="557" width="1" height="1"/><rect x="455" y="557" width="4" height="1"/><rect x="460" y="557" width="8" height="1"/><rect x="470" y="557" width="4" height="1"/><rect x="475" y="557" width="1" height="1"/><rect x="391" y="558" width="2" height="1"/><rect x="394" y="558" width="3" height="1"/><rect x="398" y="558" width="8" height="1"/><rect x="408" y="558" width="1" height="1"/><rect x="410" y="558" width="2" height="1"/><rect x="413" y="558" width="1" height="1"/><rect x="415" y="558" width="2" height="1"/><rect x="418" y="558" width="4" height="1"/><rect x="423" y="558" width="9" height="1"/><rect x="433" y="558" width="6" height="1"/><rect x="440" y="558" width="4" height="1"/><rect x="445" y="558" width="9" height="1"/><rect x="456" y="558" width="5" height="1"/><rect x="463" y="558" width="7" height="1"/><rect x="471" y="558" width="5" height="1"/><rect x="475" y="559" width="1" height="1"/></g>
<g fill="#00ff00"><rect x="397" y="562" width="5" height="1"/><rect x="403" y="562" width="2" height="1"/><rect x="406" y="562" width="1" height="1"/><rect x="409" y="562" width="3" height="1"/><rect x="413" y="562" width="1" height="1"/><rect x="415" y="562" width="6" height="1"/><rect x="422" y="562" width="4" height="1"/><rect x="427" y="562" width="12" height="1"/><rect x="440" y="562" width="5" height="1"/><rect x="447" y="562" width="1" height="1"/><rect x="454" y="562" width="2" height="1"/><rect x="459" y="562" width="1" height="1"/><rect x="462" y="562" width="1" height="1"/><rect x="466" y="562" width="5" height="1"/><rect x="472" y="562" width="2" height="1"/><rect x="475" y="562" width="1" height="1"/><rect x="480" y="562" width="3" height="1"/><rect x="484" y="562" width="2" height="1"/><rect x="488" y="562" width="2" height="1"/><rect x="494" y="562" width="5" height="1"/><rect x="500" y="562" width="2" height="1"/><rect x="503" y="562" width="2" height="1"/><rect x="507" y="562" width="7" height="1"/><rect x="516" y="562" width="1" height="1"/><rect x="518" y="562" width="5" height="1"/><rect x="391" y="563" width="3" height="1"/><rect x="397" y="563" width="5" height="1"/><rect x="403" y="563" width="2" height="1"/><rect x="406" y="563" width="1" height="1"/><rect x="409" y="563" width="5" height="1"/><rect x="415" y="563" width="5" height="1"/><rect x="421" y="563" width="5" height="1"/><rect x="427" y="563" width="24" height="1"/><rect x="452" y="563" width="4" height="1"/><rect x="457" y="563" width="6" height="1"/><rect x="466" y="563" width="5" height="1"/><rect x="472" y="563" width="6" height="1"/><rect x="480" y="563" width="12" height="1"/><rect x="494" y="563" width="30" height="1"/><rect x="393" y="564" width="1" height="1"/><rect x="397" y="564" width="5" height="1"/><rect x="403" y="564" width="5" height="1"/><rect x="409" y="564" width="11" height="1"/><rect x="422" y="564" width="4" height="1"/><rect x="427" y="564" width="6" height="1"/><rect x="435" y="564" width="2" height="1"/><rect x="440" y="564" width="5" height="1"/><rect x="446" y="564" width="4" height="1"/><rect x="452" y="564" width="5" height="1"/><rect x="458" y="564" width="5" height="1"/><rect x="466" y="564" width="12" height="1"/><rect x="480" y="564" width="11" height="1"/><rect x="494" y="564" width="12" height="1"/><rect x="507" y="564" width="4" height="1"/><rect x="512" y="564" width="2" height="1"/><rect x="515" y="564" width="9" height="1"/><rect x="525" y="564" width="1" height="1"/><rect x="392" y="565" width="2" height="1"/><rect x="397" y="565" width="5" height="1"/><rect x="403" y="565" width="2" height="1"/><rect x="409" y="565" width="1" height="1"/><rect x="411" y="565" width="22" height="1"/><rect x="434" y="565" width="4" height="1"/><rect x="439" y="565" width="6" height="1"/><rect x="446" y="565" width="5" height="1"/><rect x="452" y="565" width="3" height="1"/><rect x="458" y="565" width="5" height="1"/><rect x="466" y="565" width="5" height="1"/><rect x="472" y="565" width="5" height="1"/><rect x="480" y="565" width="11" height="1"/><rect x="494" y="565" width="30" height="1"/><rect x="525" y="565" width="1" height="1"/><rect x="393" y="566" width="1" height="1"/><rect x="397" y="566" width="5" height="1"/><rect x="403" y="566" width="5" height="1"/><rect x="409" y="566" width="11" height="1"/><rect x="421" y="566" width="30" height="1"/><rect x="452" y="566" width="5" height="1"/><rect x="458" y="566" width="5" height="1"/><rect x="466" y="566" width="8" height="1"/><rect x="475" y="566" width="2" height="1"/><rect x="481" y="566" width="10" height="1"/><rect x="494" y="566" width="5" height="1"/><rect x="501" y="566" width="23" height="1"/><rect x="391" y="567" width="3" height="1"/><rect x="395" y="567" width="1" height="1"/><rect x="397" y="567" width="5" height="1"/><rect x="403" y="567" width="1" height="1"/><rect x="406" y="567" width="2" height="1"/><rect x="410" y="567" width="10" height="1"/><rect x="421" y="567" width="5" height="1"/><rect x="427" y="567" width="6" height="1"/><rect x="435" y="567" width="2" height="1"/><rect x="440" y="567" width="5" height="1"/><rect x="446" y="567" width="5" height="1"/><rect x="452" y="567" width="3" height="1"/><rect x="456" y="567" width="5" height="1"/><rect x="462" y="567" width="1" height="1"/><rect x="464" y="567" width="1" height="1"/><rect x="466" y="567" width="2" height="1"/><rect x="469" y="567" width="2" height="1"/><rect x="472" y="567" width="2" height="1"/><rect x="475" y="567" width="2" height="1"/><rect x="478" y="567" width="1" height="1"/><rect x="480" y="567" width="3" height="1"/><rect x="484" y="567" width="7" height="1"/><rect x="492" y="567" width="2" height="1"/><rect x="495" y="567" width="5" height="1"/><rect x="501" y="567" width="5" height="1"/><rect x="507" y="567" width="17" height="1"/><rect x="525" y="567" width="1" height="1"/><rect x="392" y="568" width="1" height="1"/><rect x="395" y="568" width="9" height="1"/><rect x="406" y="568" width="2" height="1"/><rect x="409" y="568" width="2" height="1"/><rect x="412" y="568" width="1" height="1"/><rect x="415" y="568" width="2" height="1"/><rect x="418" y="568" width="2" height="1"/><rect x="422" y="568" width="2" height="1"/><rect x="425" y="568" width="8" height="1"/><rect x="435" y="568" width="2" height="1"/><rect x="440" y="568" width="1" height="1"/><rect x="442" y="568" width="2" height="1"/><rect x="446" y="568" width="2" height="1"/><rect x="449" y="568" width="2" height="1"/><rect x="453" y="568" width="7" height="1"/><rect x="461" y="568" width="2" height="1"/><rect x="464" y="568" width="1" height="1"/><rect x="467" y="568" width="4" height="1"/><rect x="472" y="568" width="34" height="1"/><rect x="508" y="568" width="3" height="1"/><rect x="512" y="568" width="4" height="1"/><rect x="517" y="568" width="2" height="1"/><rect x="520" y="568" width="4" height="1"/><rect x="525" y="568" width="1" height="1"/><rect x="464" y="569" width="1" height="1"/><rect x="478" y="569" width="1" height="1"/><rect x="492" y="569" width="1" height="1"/><rect x="524" y="569" width="2" height="1"/></g>
<g fill="#00ff00"><rect x="396" y="572" width="5" height="1"/><rect x="402" y="572" width="4" height="1"/><rect x="408" y="572" width="1" height="1"/><rect x="410" y="572" width="2" height="1"/><rect x="413" y="572" width="1" height="1"/><rect x="415" y="572" width="1" height="1"/><rect x="418" y="572" width="5" height="1"/><rect x="424" y="572" width="4" height="1"/><rect x="434" y="572" width="4" height="1"/><rect x="440" y="572" width="2" height="1"/><rect x="392" y="573" width="2" height="1"/><rect x="396" y="573" width="10" height="1"/><rect x="407" y="573" width="5" height="1"/><rect x="413" y="573" width="1" height="1"/><rect x="415" y="573" width="2" height="1"/><rect x="418" y="573" width="10" height="1"/><rect x="434" y="573" width="5" height="1"/><rect x="440" y="573" width="2" height="1"/><rect x="445" y="573" width="2" height="1"/><rect x="448" y="573" width="2" height="1"/><rect x="453" y="573" width="8" height="1"/><rect x="462" y="573" width="5" height="1"/><rect x="468" y="573" width="2" height="1"/><rect x="391" y="574" width="3" height="1"/><rect x="396" y="574" width="1" height="1"/><rect x="398" y="574" width="8" height="1"/><rect x="407" y="574" width="7" height="1"/><rect x="416" y="574" width="1" height="1"/><rect x="418" y="574" width="10" height="1"/><rect x="434" y="574" width="3" height="1"/><rect x="438" y="574" width="6" height="1"/><rect x="445" y="574" width="2" height="1"/><rect x="449" y="574" width="1" height="1"/><rect x="453" y="574" width="1" height="1"/><rect x="456" y="574" width="1" height="1"/><rect x="458" y="574" width="3" height="1"/><rect x="462" y="574" width="3" height="1"/><rect x="466" y="574" width="3" height="1"/><rect x="471" y="574" width="1" height="1"/><rect x="391" y="575" width="3" height="1"/><rect x="396" y="575" width="28" height="1"/><rect x="425" y="575" width="2" height="1"/><rect x="428" y="575" width="11" height="1"/><rect x="441" y="575" width="1" height="1"/><rect x="443" y="575" width="1" height="1"/><rect x="445" y="575" width="2" height="1"/><rect x="449" y="575" width="1" height="1"/><rect x="453" y="575" width="4" height="1"/><rect x="458" y="575" width="10" height="1"/><rect x="471" y="575" width="1" height="1"/><rect x="391" y="576" width="3" height="1"/><rect x="396" y="576" width="5" height="1"/><rect x="402" y="576" width="4" height="1"/><rect x="407" y="576" width="5" height="1"/><rect x="414" y="576" width="14" height="1"/><rect x="434" y="576" width="5" height="1"/><rect x="440" y="576" width="8" height="1"/><rect x="449" y="576" width="1" height="1"/><rect x="451" y="576" width="2" height="1"/><rect x="455" y="576" width="2" height="1"/><rect x="458" y="576" width="3" height="1"/><rect x="462" y="576" width="4" height="1"/><rect x="467" y="576" width="1" height="1"/><rect x="392" y="577" width="9" height="1"/><rect x="402" y="577" width="4" height="1"/><rect x="407" y="577" width="1" height="1"/><rect x="409" y="577" width="3" height="1"/><rect x="413" y="577" width="4" height="1"/><rect x="418" y="577" width="4" height="1"/><rect x="423" y="577" width="5" height="1"/><rect x="434" y="577" width="4" height="1"/><rect x="440" y="577" width="1" height="1"/><rect x="443" y="577" width="1" height="1"/><rect x="446" y="577" width="1" height="1"/><rect x="448" y="577" width="3" height="1"/><rect x="453" y="577" width="8" height="1"/><rect x="462" y="577" width="10" height="1"/><rect x="396" y="578" width="10" height="1"/><rect x="407" y="578" width="4" height="1"/><rect x="412" y="578" width="4" height="1"/><rect x="418" y="578" width="10" height="1"/><rect x="434" y="578" width="7" height="1"/><rect x="442" y="578" width="2" height="1"/><rect x="446" y="578" width="1" height="1"/><rect x="448" y="578" width="2" height="1"/><rect x="453" y="578" width="2" height="1"/><rect x="457" y="578" width="1" height="1"/><rect x="462" y="578" width="1" height="1"/><rect x="464" y="578" width="1" height="1"/><rect x="466" y="578" width="1" height="1"/><rect x="468" y="578" width="2" height="1"/><rect x="471" y="578" width="1" height="1"/><rect x="471" y="579" width="1" height="1"/></g>
<g fill="#00ff00"><rect x="396" y="582" width="5" height="1"/><rect x="403" y="582" width="5" height="1"/><rect x="409" y="582" width="1" height="1"/><rect x="411" y="582" width="2" height="1"/><rect x="415" y="582" width="1" height="1"/><rect x="417" y="582" width="1" height="1"/><rect x="422" y="582" width="1" height="1"/><rect x="427" y="582" width="1" height="1"/><rect x="433" y="582" width="1" height="1"/><rect x="435" y="582" width="1" height="1"/><rect x="438" y="582" width="4" height="1"/><rect x="444" y="582" width="2" height="1"/><rect x="447" y="582" width="1" height="1"/><rect x="450" y="582" width="4" height="1"/><rect x="456" y="582" width="1" height="1"/><rect x="458" y="582" width="2" height="1"/><rect x="461" y="582" width="1" height="1"/><rect x="464" y="582" width="1" height="1"/><rect x="467" y="582" width="1" height="1"/><rect x="469" y="582" width="2" height="1"/><rect x="473" y="582" width="5" height="1"/><rect x="480" y="582" width="2" height="1"/><rect x="485" y="582" width="1" height="1"/><rect x="487" y="582" width="2" height="1"/><rect x="490" y="582" width="1" height="1"/><rect x="493" y="582" width="1" height="1"/><rect x="498" y="582" width="1" height="1"/><rect x="502" y="582" width="1" height="1"/><rect x="504" y="582" width="2" height="1"/><rect x="507" y="582" width="6" height="1"/><rect x="391" y="583" width="3" height="1"/><rect x="397" y="583" width="10" height="1"/><rect x="408" y="583" width="6" height="1"/><rect x="415" y="583" width="1" height="1"/><rect x="417" y="583" width="2" height="1"/><rect x="420" y="583" width="11" height="1"/><rect x="432" y="583" width="2" height="1"/><rect x="435" y="583" width="1" height="1"/><rect x="437" y="583" width="11" height="1"/><rect x="449" y="583" width="5" height="1"/><rect x="455" y="583" width="5" height="1"/><rect x="461" y="583" width="4" height="1"/><rect x="467" y="583" width="7" height="1"/><rect x="475" y="583" width="14" height="1"/><rect x="490" y="583" width="5" height="1"/><rect x="498" y="583" width="1" height="1"/><rect x="502" y="583" width="4" height="1"/><rect x="507" y="583" width="6" height="1"/><rect x="391" y="584" width="2" height="1"/><rect x="397" y="584" width="16" height="1"/><rect x="414" y="584" width="2" height="1"/><rect x="418" y="584" width="1" height="1"/><rect x="420" y="584" width="1" height="1"/><rect x="422" y="584" width="1" height="1"/><rect x="424" y="584" width="1" height="1"/><rect x="426" y="584" width="4" height="1"/><rect x="432" y="584" width="1" height="1"/><rect x="435" y="584" width="2" height="1"/><rect x="438" y="584" width="4" height="1"/><rect x="443" y="584" width="11" height="1"/><rect x="455" y="584" width="5" height="1"/><rect x="461" y="584" width="4" height="1"/><rect x="468" y="584" width="7" height="1"/><rect x="479" y="584" width="4" height="1"/><rect x="484" y="584" width="7" height="1"/><rect x="492" y="584" width="1" height="1"/><rect x="494" y="584" width="1" height="1"/><rect x="496" y="584" width="3" height="1"/><rect x="500" y="584" width="1" height="1"/><rect x="502" y="584" width="4" height="1"/><rect x="508" y="584" width="5" height="1"/><rect x="391" y="585" width="3" height="1"/><rect x="396" y="585" width="17" height="1"/><rect x="414" y="585" width="5" height="1"/><rect x="420" y="585" width="3" height="1"/><rect x="424" y="585" width="1" height="1"/><rect x="426" y="585" width="4" height="1"/><rect x="431" y="585" width="6" height="1"/><rect x="438" y="585" width="4" height="1"/><rect x="444" y="585" width="4" height="1"/><rect x="449" y="585" width="5" height="1"/><rect x="455" y="585" width="5" height="1"/><rect x="461" y="585" width="11" height="1"/><rect x="473" y="585" width="5" height="1"/><rect x="479" y="585" width="4" height="1"/><rect x="484" y="585" width="7" height="1"/><rect x="492" y="585" width="3" height="1"/><rect x="496" y="585" width="1" height="1"/><rect x="498" y="585" width="15" height="1"/><rect x="393" y="586" width="1" height="1"/><rect x="396" y="586" width="6" height="1"/><rect x="403" y="586" width="4" height="1"/><rect x="408" y="586" width="6" height="1"/><rect x="415" y="586" width="4" height="1"/><rect x="420" y="586" width="11" height="1"/><rect x="433" y="586" width="1" height="1"/><rect x="435" y="586" width="1" height="1"/><rect x="438" y="586" width="4" height="1"/><rect x="443" y="586" width="11" height="1"/><rect x="455" y="586" width="5" height="1"/><rect x="461" y="586" width="5" height="1"/><rect x="467" y="586" width="7" height="1"/><rect x="476" y="586" width="1" height="1"/><rect x="478" y="586" width="12" height="1"/><rect x="491" y="586" width="4" height="1"/><rect x="496" y="586" width="3" height="1"/><rect x="501" y="586" width="6" height="1"/><rect x="508" y="586" width="1" height="1"/><rect x="510" y="586" width="2" height="1"/><rect x="393" y="587" width="1" height="1"/><rect x="395" y="587" width="7" height="1"/><rect x="403" y="587" width="4" height="1"/><rect x="408" y="587" width="6" height="1"/><rect x="415" y="587" width="4" height="1"/><rect x="420" y="587" width="4" height="1"/><rect x="426" y="587" width="1" height="1"/><rect x="429" y="587" width="1" height="1"/><rect x="433" y="587" width="1" height="1"/><rect x="435" y="587" width="1" height="1"/><rect x="437" y="587" width="17" height="1"/><rect x="455" y="587" width="5" height="1"/><rect x="462" y="587" width="1" height="1"/><rect x="464" y="587" width="1" height="1"/><rect x="467" y="587" width="4" height="1"/><rect x="473" y="587" width="1" height="1"/><rect x="476" y="587" width="1" height="1"/><rect x="478" y="587" width="18" height="1"/><rect x="497" y="587" width="3" height="1"/><rect x="502" y="587" width="4" height="1"/><rect x="508" y="587" width="7" height="1"/><rect x="391" y="588" width="5" height="1"/><rect x="397" y="588" width="5" height="1"/><rect x="403" y="588" width="4" height="1"/><rect x="408" y="588" width="5" height="1"/><rect x="414" y="588" width="2" height="1"/><rect x="417" y="588" width="2" height="1"/><rect x="420" y="588" width="5" height="1"/><rect x="426" y="588" width="5" height="1"/><rect x="432" y="588" width="2" height="1"/><rect x="435" y="588" width="1" height="1"/><rect x="437" y="588" width="6" height="1"/><rect x="444" y="588" width="10" height="1"/><rect x="455" y="588" width="5" height="1"/><rect x="461" y="588" width="11" height="1"/><rect x="473" y="588" width="1" height="1"/><rect x="476" y="588" width="1" height="1"/><rect x="478" y="588" width="6" height="1"/><rect x="485" y="588" width="1" height="1"/><rect x="487" y="588" width="2" height="1"/><rect x="490" y="588" width="1" height="1"/><rect x="493" y="588" width="1" height="1"/><rect x="496" y="588" width="2" height="1"/><rect x="499" y="588" width="2" height="1"/><rect x="502" y="588" width="13" height="1"/><rect x="398" y="589" width="6" height="1"/><rect x="406" y="589" width="1" height="1"/><rect x="408" y="589" width="4" height="1"/><rect x="414" y="589" width="1" height="1"/><rect x="416" y="589" width="2" height="1"/><rect x="420" y="589" width="5" height="1"/><rect x="426" y="589" width="5" height="1"/><rect x="432" y="589" width="1" height="1"/><rect x="434" y="589" width="2" height="1"/><rect x="437" y="589" width="2" height="1"/><rect x="441" y="589" width="8" height="1"/><rect x="450" y="589" width="4" height="1"/><rect x="455" y="589" width="4" height="1"/><rect x="461" y="589" width="1" height="1"/><rect x="463" y="589" width="4" height="1"/><rect x="468" y="589" width="4" height="1"/><rect x="473" y="589" width="1" height="1"/><rect x="475" y="589" width="2" height="1"/><rect x="478" y="589" width="3" height="1"/><rect x="482" y="589" width="1" height="1"/><rect x="484" y="589" width="1" height="1"/><rect x="486" y="589" width="5" height="1"/><rect x="493" y="589" width="1" height="1"/><rect x="496" y="589" width="1" height="1"/><rect x="500" y="589" width="3" height="1"/><rect x="504" y="589" width="3" height="1"/><rect x="509" y="589" width="6" height="1"/></g>
<g stroke="#fff" stroke-width="1">
<line x1="648" y1="573.5" x2="935" y2="573.5"/>
<line x1="648" y1="584.5" x2="775" y2="584.5"/>
<line x1="648" y1="596.5" x2="775" y2="596.5"/>
<line x1="648" y1="607.5" x2="775" y2="607.5"/>
<line x1="648" y1="618.5" x2="775" y2="618.5"/>
<line x1="648" y1="629.5" x2="775" y2="629.5"/>
<line x1="648" y1="640.5" x2="775" y2="640.5"/>
<line x1="648" y1="651.5" x2="775" y2="651.5"/>
<line x1="648.5" y1="573" x2="648.5" y2="663"/>
<line x1="775.5" y1="573" x2="775.5" y2="663"/>
<line x1="854.5" y1="573" x2="854.5" y2="663"/>
<line x1="664.5" y1="573" x2="664.5" y2="618"/>
<line x1="680.5" y1="573" x2="680.5" y2="618"/>
<line x1="705.5" y1="573" x2="705.5" y2="618"/>
<line x1="731.5" y1="573" x2="731.5" y2="618"/>
<line x1="750.5" y1="573" x2="750.5" y2="618"/>
<line x1="667.5" y1="618" x2="667.5" y2="663"/>
<line x1="686.5" y1="618" x2="686.5" y2="663"/>
<line x1="712.5" y1="618" x2="712.5" y2="663"/>
<line x1="731.5" y1="618" x2="731.5" y2="663"/>
<line x1="750.5" y1="618" x2="750.5" y2="663"/>
<line x1="854" y1="600.5" x2="935" y2="600.5"/>
<line x1="854" y1="629.5" x2="935" y2="629.5"/>
<line x1="775" y1="618.5" x2="854" y2="618.5"/>
<line x1="775" y1="634.5" x2="854" y2="634.5"/>
<line x1="775" y1="648.5" x2="854" y2="648.5"/>
<line x1="816.5" y1="618" x2="816.5" y2="648"/>
<line x1="835.5" y1="618" x2="835.5" y2="648"/>
<line x1="785.5" y1="634" x2="785.5" y2="648"/>
<line x1="796.5" y1="634" x2="796.5" y2="648"/>
<line x1="806.5" y1="634" x2="806.5" y2="648"/>
</g>
<g fill="#00ff00"><rect x="652" y="609" width="1" height="1"/><rect x="654" y="609" width="2" height="1"/><rect x="657" y="609" width="1" height="1"/><rect x="659" y="609" width="3" height="1"/><rect x="652" y="610" width="4" height="1"/><rect x="657" y="610" width="5" height="1"/><rect x="651" y="611" width="3" height="1"/><rect x="661" y="611" width="1" height="1"/><rect x="651" y="612" width="11" height="1"/><rect x="651" y="613" width="4" height="1"/><rect x="657" y="613" width="5" height="1"/><rect x="651" y="614" width="5" height="1"/><rect x="657" y="614" width="3" height="1"/><rect x="651" y="615" width="5" height="1"/><rect x="657" y="615" width="3" height="1"/><rect x="661" y="615" width="1" height="1"/><rect x="652" y="616" width="10" height="1"/><rect x="652" y="617" width="1" height="1"/><rect x="654" y="617" width="1" height="1"/><rect x="657" y="617" width="1" height="1"/><rect x="659" y="617" width="3" height="1"/></g>
<g fill="#00ff00"><rect x="668" y="609" width="1" height="1"/><rect x="670" y="609" width="1" height="1"/><rect x="673" y="609" width="4" height="1"/><rect x="668" y="610" width="3" height="1"/><rect x="673" y="610" width="4" height="1"/><rect x="667" y="611" width="5" height="1"/><rect x="673" y="611" width="5" height="1"/><rect x="667" y="612" width="5" height="1"/><rect x="673" y="612" width="5" height="1"/><rect x="667" y="613" width="11" height="1"/><rect x="668" y="614" width="3" height="1"/><rect x="673" y="614" width="4" height="1"/><rect x="668" y="615" width="3" height="1"/><rect x="673" y="615" width="2" height="1"/><rect x="676" y="615" width="1" height="1"/><rect x="667" y="616" width="5" height="1"/><rect x="673" y="616" width="5" height="1"/><rect x="667" y="617" width="1" height="1"/><rect x="669" y="617" width="5" height="1"/><rect x="675" y="617" width="1" height="1"/><rect x="677" y="617" width="1" height="1"/></g>
<g fill="#00ff00"><rect x="688" y="609" width="1" height="1"/><rect x="690" y="609" width="1" height="1"/><rect x="692" y="609" width="5" height="1"/><rect x="688" y="610" width="1" height="1"/><rect x="690" y="610" width="1" height="1"/><rect x="692" y="610" width="5" height="1"/><rect x="687" y="611" width="2" height="1"/><rect x="690" y="611" width="4" height="1"/><rect x="695" y="611" width="1" height="1"/><rect x="687" y="612" width="9" height="1"/><rect x="687" y="613" width="4" height="1"/><rect x="692" y="613" width="1" height="1"/><rect x="694" y="613" width="2" height="1"/><rect x="688" y="614" width="3" height="1"/><rect x="692" y="614" width="4" height="1"/><rect x="688" y="615" width="1" height="1"/><rect x="690" y="615" width="1" height="1"/><rect x="692" y="615" width="2" height="1"/><rect x="695" y="615" width="2" height="1"/><rect x="687" y="616" width="2" height="1"/><rect x="690" y="616" width="1" height="1"/><rect x="692" y="616" width="5" height="1"/><rect x="687" y="617" width="1" height="1"/><rect x="689" y="617" width="2" height="1"/><rect x="692" y="617" width="5" height="1"/></g>
<g fill="#00ff00"><rect x="706" y="609" width="5" height="1"/><rect x="712" y="609" width="1" height="1"/><rect x="714" y="609" width="1" height="1"/><rect x="718" y="609" width="1" height="1"/><rect x="722" y="609" width="1" height="1"/><rect x="724" y="609" width="1" height="1"/><rect x="727" y="609" width="3" height="1"/><rect x="706" y="610" width="9" height="1"/><rect x="716" y="610" width="5" height="1"/><rect x="722" y="610" width="3" height="1"/><rect x="727" y="610" width="4" height="1"/><rect x="706" y="611" width="5" height="1"/><rect x="712" y="611" width="14" height="1"/><rect x="727" y="611" width="4" height="1"/><rect x="706" y="612" width="10" height="1"/><rect x="717" y="612" width="1" height="1"/><rect x="719" y="612" width="1" height="1"/><rect x="721" y="612" width="4" height="1"/><rect x="727" y="612" width="4" height="1"/><rect x="706" y="613" width="10" height="1"/><rect x="717" y="613" width="3" height="1"/><rect x="721" y="613" width="10" height="1"/><rect x="706" y="614" width="6" height="1"/><rect x="714" y="614" width="1" height="1"/><rect x="718" y="614" width="2" height="1"/><rect x="722" y="614" width="4" height="1"/><rect x="727" y="614" width="3" height="1"/><rect x="706" y="615" width="3" height="1"/><rect x="711" y="615" width="2" height="1"/><rect x="714" y="615" width="1" height="1"/><rect x="718" y="615" width="2" height="1"/><rect x="722" y="615" width="1" height="1"/><rect x="724" y="615" width="1" height="1"/><rect x="727" y="615" width="4" height="1"/><rect x="706" y="616" width="15" height="1"/><rect x="722" y="616" width="1" height="1"/><rect x="724" y="616" width="1" height="1"/><rect x="729" y="616" width="2" height="1"/><rect x="706" y="617" width="6" height="1"/><rect x="713" y="617" width="1" height="1"/><rect x="715" y="617" width="3" height="1"/><rect x="720" y="617" width="1" height="1"/><rect x="722" y="617" width="1" height="1"/><rect x="724" y="617" width="1" height="1"/><rect x="728" y="617" width="2" height="1"/></g>
<g fill="#00ff00"><rect x="736" y="609" width="1" height="1"/><rect x="738" y="609" width="1" height="1"/><rect x="743" y="609" width="1" height="1"/><rect x="735" y="610" width="6" height="1"/><rect x="742" y="610" width="4" height="1"/><rect x="735" y="611" width="5" height="1"/><rect x="741" y="611" width="2" height="1"/><rect x="744" y="611" width="2" height="1"/><rect x="736" y="612" width="4" height="1"/><rect x="742" y="612" width="3" height="1"/><rect x="735" y="613" width="6" height="1"/><rect x="742" y="613" width="4" height="1"/><rect x="736" y="614" width="2" height="1"/><rect x="739" y="614" width="1" height="1"/><rect x="741" y="614" width="5" height="1"/><rect x="736" y="615" width="4" height="1"/><rect x="741" y="615" width="2" height="1"/><rect x="745" y="615" width="1" height="1"/><rect x="735" y="616" width="5" height="1"/><rect x="742" y="616" width="4" height="1"/><rect x="735" y="617" width="6" height="1"/><rect x="742" y="617" width="4" height="1"/></g>
<g fill="#00ff00"><rect x="757" y="609" width="4" height="1"/><rect x="762" y="609" width="5" height="1"/><rect x="757" y="610" width="4" height="1"/><rect x="762" y="610" width="5" height="1"/><rect x="757" y="611" width="1" height="1"/><rect x="760" y="611" width="1" height="1"/><rect x="762" y="611" width="5" height="1"/><rect x="757" y="612" width="1" height="1"/><rect x="760" y="612" width="1" height="1"/><rect x="762" y="612" width="5" height="1"/><rect x="757" y="613" width="4" height="1"/><rect x="762" y="613" width="5" height="1"/><rect x="757" y="614" width="1" height="1"/><rect x="760" y="614" width="1" height="1"/><rect x="762" y="614" width="5" height="1"/><rect x="757" y="615" width="1" height="1"/><rect x="760" y="615" width="1" height="1"/><rect x="762" y="615" width="5" height="1"/><rect x="757" y="616" width="4" height="1"/><rect x="762" y="616" width="5" height="1"/><rect x="757" y="617" width="1" height="1"/><rect x="760" y="617" width="1" height="1"/><rect x="762" y="617" width="1" height="1"/><rect x="764" y="617" width="3" height="1"/></g>
<g fill="#00ff00"><rect x="652" y="621" width="5" height="1"/><rect x="659" y="621" width="1" height="1"/><rect x="661" y="621" width="2" height="1"/><rect x="653" y="622" width="4" height="1"/><rect x="659" y="622" width="1" height="1"/><rect x="661" y="622" width="2" height="1"/><rect x="652" y="623" width="3" height="1"/><rect x="656" y="623" width="8" height="1"/><rect x="652" y="624" width="12" height="1"/><rect x="652" y="625" width="6" height="1"/><rect x="659" y="625" width="1" height="1"/><rect x="661" y="625" width="2" height="1"/><rect x="652" y="626" width="5" height="1"/><rect x="659" y="626" width="4" height="1"/><rect x="652" y="627" width="5" height="1"/><rect x="659" y="627" width="4" height="1"/><rect x="652" y="628" width="1" height="1"/><rect x="654" y="628" width="4" height="1"/><rect x="659" y="628" width="1" height="1"/><rect x="661" y="628" width="2" height="1"/></g>
<g fill="#00ff00"><rect x="653" y="631" width="1" height="1"/><rect x="655" y="631" width="2" height="1"/><rect x="662" y="631" width="2" height="1"/><rect x="652" y="632" width="9" height="1"/><rect x="662" y="632" width="2" height="1"/><rect x="652" y="633" width="6" height="1"/><rect x="660" y="633" width="4" height="1"/><rect x="652" y="634" width="9" height="1"/><rect x="662" y="634" width="2" height="1"/><rect x="652" y="635" width="5" height="1"/><rect x="659" y="635" width="5" height="1"/><rect x="652" y="636" width="2" height="1"/><rect x="655" y="636" width="2" height="1"/><rect x="659" y="636" width="5" height="1"/><rect x="652" y="637" width="2" height="1"/><rect x="655" y="637" width="2" height="1"/><rect x="658" y="637" width="3" height="1"/><rect x="662" y="637" width="2" height="1"/><rect x="653" y="638" width="6" height="1"/><rect x="662" y="638" width="1" height="1"/></g>
<g fill="#00ff00"><rect x="655" y="643" width="1" height="1"/><rect x="658" y="643" width="2" height="1"/><rect x="661" y="643" width="1" height="1"/><rect x="653" y="644" width="10" height="1"/><rect x="653" y="645" width="10" height="1"/><rect x="653" y="646" width="4" height="1"/><rect x="658" y="646" width="5" height="1"/><rect x="653" y="647" width="4" height="1"/><rect x="658" y="647" width="5" height="1"/><rect x="653" y="648" width="4" height="1"/><rect x="658" y="648" width="5" height="1"/><rect x="653" y="649" width="4" height="1"/><rect x="658" y="649" width="5" height="1"/><rect x="655" y="650" width="1" height="1"/><rect x="658" y="650" width="3" height="1"/><rect x="662" y="650" width="1" height="1"/></g>
<g fill="#00ff00"><rect x="659" y="653" width="2" height="1"/><rect x="662" y="653" width="1" height="1"/><rect x="652" y="654" width="12" height="1"/><rect x="653" y="655" width="4" height="1"/><rect x="659" y="655" width="2" height="1"/><rect x="662" y="655" width="1" height="1"/><rect x="654" y="656" width="2" height="1"/><rect x="659" y="656" width="4" height="1"/><rect x="654" y="657" width="2" height="1"/><rect x="659" y="657" width="4" height="1"/><rect x="654" y="658" width="2" height="1"/><rect x="660" y="658" width="2" height="1"/><rect x="654" y="659" width="2" height="1"/><rect x="659" y="659" width="2" height="1"/><rect x="663" y="659" width="1" height="1"/><rect x="652" y="660" width="6" height="1"/><rect x="659" y="660" width="1" height="1"/><rect x="663" y="660" width="1" height="1"/><rect x="652" y="661" width="6" height="1"/><rect x="659" y="661" width="5" height="1"/></g>
<g fill="#00ff00"><rect x="714" y="620" width="1" height="1"/><rect x="716" y="620" width="2" height="1"/><rect x="719" y="620" width="1" height="1"/><rect x="721" y="620" width="2" height="1"/><rect x="726" y="620" width="2" height="1"/><rect x="713" y="621" width="5" height="1"/><rect x="719" y="621" width="5" height="1"/><rect x="725" y="621" width="3" height="1"/><rect x="729" y="621" width="1" height="1"/><rect x="713" y="622" width="11" height="1"/><rect x="725" y="622" width="1" height="1"/><rect x="727" y="622" width="3" height="1"/><rect x="713" y="623" width="6" height="1"/><rect x="720" y="623" width="6" height="1"/><rect x="727" y="623" width="2" height="1"/><rect x="713" y="624" width="5" height="1"/><rect x="719" y="624" width="4" height="1"/><rect x="725" y="624" width="3" height="1"/><rect x="713" y="625" width="11" height="1"/><rect x="725" y="625" width="3" height="1"/><rect x="729" y="625" width="1" height="1"/><rect x="714" y="626" width="10" height="1"/><rect x="725" y="626" width="1" height="1"/><rect x="727" y="626" width="3" height="1"/><rect x="714" y="627" width="1" height="1"/><rect x="716" y="627" width="1" height="1"/><rect x="719" y="627" width="5" height="1"/><rect x="725" y="627" width="1" height="1"/><rect x="727" y="627" width="3" height="1"/></g>
<g fill="#00ff00"><rect x="719" y="632" width="1" height="1"/><rect x="724" y="632" width="1" height="1"/><rect x="717" y="633" width="10" height="1"/><rect x="717" y="634" width="10" height="1"/><rect x="717" y="635" width="5" height="1"/><rect x="723" y="635" width="3" height="1"/><rect x="717" y="636" width="5" height="1"/><rect x="723" y="636" width="3" height="1"/><rect x="717" y="637" width="9" height="1"/><rect x="717" y="638" width="8" height="1"/><rect x="719" y="639" width="1" height="1"/><rect x="722" y="639" width="1" height="1"/><rect x="724" y="639" width="3" height="1"/></g>
<g fill="#00ff00"><rect x="717" y="654" width="4" height="1"/><rect x="722" y="654" width="1" height="1"/><rect x="724" y="654" width="2" height="1"/><rect x="716" y="655" width="5" height="1"/><rect x="722" y="655" width="5" height="1"/><rect x="716" y="656" width="5" height="1"/><rect x="722" y="656" width="5" height="1"/><rect x="716" y="657" width="5" height="1"/><rect x="722" y="657" width="5" height="1"/><rect x="716" y="658" width="5" height="1"/><rect x="722" y="658" width="4" height="1"/><rect x="716" y="659" width="5" height="1"/><rect x="722" y="659" width="5" height="1"/><rect x="716" y="660" width="11" height="1"/><rect x="716" y="661" width="5" height="1"/><rect x="722" y="661" width="5" height="1"/></g>
<g fill="#00ff00"><rect x="785" y="623" width="2" height="1"/><rect x="788" y="623" width="1" height="1"/><rect x="791" y="623" width="4" height="1"/><rect x="797" y="623" width="1" height="1"/><rect x="799" y="623" width="2" height="1"/><rect x="802" y="623" width="1" height="1"/><rect x="804" y="623" width="3" height="1"/><rect x="785" y="624" width="4" height="1"/><rect x="791" y="624" width="1" height="1"/><rect x="793" y="624" width="2" height="1"/><rect x="796" y="624" width="5" height="1"/><rect x="802" y="624" width="5" height="1"/><rect x="785" y="625" width="3" height="1"/><rect x="789" y="625" width="6" height="1"/><rect x="796" y="625" width="7" height="1"/><rect x="806" y="625" width="1" height="1"/><rect x="785" y="626" width="3" height="1"/><rect x="789" y="626" width="1" height="1"/><rect x="791" y="626" width="16" height="1"/><rect x="785" y="627" width="5" height="1"/><rect x="791" y="627" width="10" height="1"/><rect x="802" y="627" width="5" height="1"/><rect x="785" y="628" width="10" height="1"/><rect x="796" y="628" width="5" height="1"/><rect x="802" y="628" width="3" height="1"/><rect x="785" y="629" width="1" height="1"/><rect x="787" y="629" width="5" height="1"/><rect x="793" y="629" width="2" height="1"/><rect x="797" y="629" width="8" height="1"/><rect x="806" y="629" width="1" height="1"/><rect x="785" y="630" width="1" height="1"/><rect x="787" y="630" width="3" height="1"/><rect x="791" y="630" width="5" height="1"/><rect x="797" y="630" width="1" height="1"/><rect x="799" y="630" width="1" height="1"/><rect x="802" y="630" width="1" height="1"/><rect x="804" y="630" width="3" height="1"/></g>
<g fill="#00ff00"><rect x="820" y="623" width="5" height="1"/><rect x="827" y="623" width="4" height="1"/><rect x="820" y="624" width="6" height="1"/><rect x="827" y="624" width="4" height="1"/><rect x="820" y="625" width="6" height="1"/><rect x="827" y="625" width="5" height="1"/><rect x="820" y="626" width="5" height="1"/><rect x="826" y="626" width="6" height="1"/><rect x="820" y="627" width="5" height="1"/><rect x="827" y="627" width="5" height="1"/><rect x="821" y="628" width="4" height="1"/><rect x="827" y="628" width="5" height="1"/><rect x="820" y="629" width="6" height="1"/><rect x="827" y="629" width="5" height="1"/><rect x="820" y="630" width="12" height="1"/></g>
<g fill="#00ff00"><rect x="840" y="623" width="1" height="1"/><rect x="842" y="623" width="2" height="1"/><rect x="846" y="623" width="3" height="1"/><rect x="850" y="623" width="1" height="1"/><rect x="840" y="624" width="1" height="1"/><rect x="842" y="624" width="3" height="1"/><rect x="846" y="624" width="5" height="1"/><rect x="840" y="625" width="11" height="1"/><rect x="840" y="626" width="11" height="1"/><rect x="840" y="627" width="1" height="1"/><rect x="842" y="627" width="2" height="1"/><rect x="846" y="627" width="5" height="1"/><rect x="840" y="628" width="1" height="1"/><rect x="842" y="628" width="3" height="1"/><rect x="846" y="628" width="1" height="1"/><rect x="848" y="628" width="3" height="1"/><rect x="840" y="629" width="5" height="1"/><rect x="846" y="629" width="3" height="1"/><rect x="850" y="629" width="1" height="1"/><rect x="840" y="630" width="1" height="1"/><rect x="843" y="630" width="2" height="1"/><rect x="846" y="630" width="2" height="1"/><rect x="849" y="630" width="2" height="1"/></g>
<g fill="#00ff00"><rect x="781" y="652" width="4" height="1"/><rect x="780" y="653" width="6" height="1"/><rect x="780" y="654" width="6" height="1"/><rect x="781" y="655" width="4" height="1"/><rect x="780" y="656" width="6" height="1"/><rect x="781" y="657" width="5" height="1"/><rect x="781" y="658" width="1" height="1"/><rect x="784" y="658" width="2" height="1"/><rect x="780" y="659" width="2" height="1"/><rect x="785" y="659" width="1" height="1"/></g>
<g fill="#00ff00"><rect x="803" y="652" width="3" height="1"/><rect x="807" y="652" width="1" height="1"/><rect x="804" y="653" width="4" height="1"/><rect x="803" y="654" width="4" height="1"/><rect x="803" y="655" width="5" height="1"/><rect x="803" y="656" width="4" height="1"/><rect x="804" y="657" width="3" height="1"/><rect x="804" y="658" width="4" height="1"/><rect x="803" y="659" width="3" height="1"/><rect x="807" y="659" width="1" height="1"/></g>
<g fill="#00ff00"><rect x="822" y="652" width="5" height="1"/><rect x="822" y="653" width="5" height="1"/><rect x="822" y="654" width="5" height="1"/><rect x="822" y="655" width="5" height="1"/><rect x="822" y="656" width="5" height="1"/><rect x="822" y="657" width="5" height="1"/><rect x="823" y="658" width="4" height="1"/><rect x="822" y="659" width="1" height="1"/><rect x="824" y="659" width="3" height="1"/></g>
<g fill="#00ff00"><rect x="844" y="652" width="4" height="1"/><rect x="849" y="652" width="1" height="1"/><rect x="845" y="653" width="5" height="1"/><rect x="844" y="654" width="5" height="1"/><rect x="844" y="655" width="1" height="1"/><rect x="846" y="655" width="4" height="1"/><rect x="844" y="656" width="5" height="1"/><rect x="845" y="657" width="4" height="1"/><rect x="845" y="658" width="5" height="1"/><rect x="844" y="659" width="4" height="1"/><rect x="849" y="659" width="1" height="1"/></g>
<g fill="#00ff00"><rect x="880" y="609" width="2" height="1"/><rect x="883" y="609" width="3" height="1"/><rect x="888" y="609" width="1" height="1"/><rect x="891" y="609" width="2" height="1"/><rect x="896" y="609" width="2" height="1"/><rect x="899" y="609" width="1" height="1"/><rect x="901" y="609" width="1" height="1"/><rect x="904" y="609" width="2" height="1"/><rect x="907" y="609" width="2" height="1"/><rect x="879" y="610" width="8" height="1"/><rect x="888" y="610" width="2" height="1"/><rect x="891" y="610" width="2" height="1"/><rect x="895" y="610" width="3" height="1"/><rect x="899" y="610" width="1" height="1"/><rect x="901" y="610" width="1" height="1"/><rect x="904" y="610" width="7" height="1"/><rect x="879" y="611" width="7" height="1"/><rect x="888" y="611" width="2" height="1"/><rect x="891" y="611" width="2" height="1"/><rect x="897" y="611" width="1" height="1"/><rect x="899" y="611" width="3" height="1"/><rect x="903" y="611" width="7" height="1"/><rect x="879" y="612" width="7" height="1"/><rect x="888" y="612" width="6" height="1"/><rect x="896" y="612" width="7" height="1"/><rect x="904" y="612" width="7" height="1"/><rect x="879" y="613" width="7" height="1"/><rect x="888" y="613" width="15" height="1"/><rect x="904" y="613" width="7" height="1"/><rect x="879" y="614" width="7" height="1"/><rect x="888" y="614" width="2" height="1"/><rect x="895" y="614" width="2" height="1"/><rect x="898" y="614" width="13" height="1"/><rect x="879" y="615" width="7" height="1"/><rect x="888" y="615" width="5" height="1"/><rect x="895" y="615" width="8" height="1"/><rect x="904" y="615" width="6" height="1"/><rect x="879" y="616" width="7" height="1"/><rect x="888" y="616" width="6" height="1"/><rect x="895" y="616" width="8" height="1"/><rect x="904" y="616" width="6" height="1"/><rect x="879" y="617" width="8" height="1"/><rect x="888" y="617" width="1" height="1"/><rect x="892" y="617" width="2" height="1"/><rect x="897" y="617" width="6" height="1"/><rect x="904" y="617" width="6" height="1"/><rect x="879" y="618" width="1" height="1"/><rect x="881" y="618" width="1" height="1"/><rect x="883" y="618" width="3" height="1"/><rect x="887" y="618" width="2" height="1"/><rect x="892" y="618" width="2" height="1"/><rect x="897" y="618" width="6" height="1"/><rect x="904" y="618" width="6" height="1"/><rect x="879" y="619" width="10" height="1"/><rect x="892" y="619" width="2" height="1"/><rect x="896" y="619" width="2" height="1"/><rect x="900" y="619" width="1" height="1"/><rect x="904" y="619" width="3" height="1"/><rect x="908" y="619" width="2" height="1"/><rect x="879" y="620" width="5" height="1"/><rect x="885" y="620" width="4" height="1"/><rect x="892" y="620" width="2" height="1"/><rect x="896" y="620" width="2" height="1"/><rect x="900" y="620" width="1" height="1"/><rect x="904" y="620" width="2" height="1"/><rect x="909" y="620" width="2" height="1"/></g>
<g fill="#00ff00"><rect x="793" y="597" width="2" height="1"/><rect x="797" y="597" width="2" height="1"/><rect x="801" y="597" width="3" height="1"/><rect x="805" y="597" width="1" height="1"/><rect x="807" y="597" width="2" height="1"/><rect x="811" y="597" width="1" height="1"/><rect x="815" y="597" width="1" height="1"/><rect x="822" y="597" width="1" height="1"/><rect x="792" y="598" width="3" height="1"/><rect x="796" y="598" width="1" height="1"/><rect x="798" y="598" width="1" height="1"/><rect x="800" y="598" width="2" height="1"/><rect x="803" y="598" width="1" height="1"/><rect x="806" y="598" width="6" height="1"/><rect x="814" y="598" width="2" height="1"/><rect x="822" y="598" width="2" height="1"/><rect x="792" y="599" width="1" height="1"/><rect x="796" y="599" width="1" height="1"/><rect x="798" y="599" width="3" height="1"/><rect x="805" y="599" width="1" height="1"/><rect x="809" y="599" width="3" height="1"/><rect x="814" y="599" width="6" height="1"/><rect x="821" y="599" width="3" height="1"/><rect x="792" y="600" width="3" height="1"/><rect x="796" y="600" width="1" height="1"/><rect x="798" y="600" width="5" height="1"/><rect x="805" y="600" width="1" height="1"/><rect x="808" y="600" width="5" height="1"/><rect x="814" y="600" width="4" height="1"/><rect x="819" y="600" width="1" height="1"/><rect x="821" y="600" width="1" height="1"/><rect x="823" y="600" width="1" height="1"/><rect x="792" y="601" width="1" height="1"/><rect x="794" y="601" width="3" height="1"/><rect x="798" y="601" width="2" height="1"/><rect x="801" y="601" width="3" height="1"/><rect x="805" y="601" width="1" height="1"/><rect x="808" y="601" width="1" height="1"/><rect x="810" y="601" width="8" height="1"/><rect x="819" y="601" width="1" height="1"/><rect x="821" y="601" width="1" height="1"/><rect x="823" y="601" width="1" height="1"/><rect x="792" y="602" width="1" height="1"/><rect x="794" y="602" width="3" height="1"/><rect x="798" y="602" width="2" height="1"/><rect x="803" y="602" width="1" height="1"/><rect x="805" y="602" width="1" height="1"/><rect x="807" y="602" width="1" height="1"/><rect x="810" y="602" width="4" height="1"/><rect x="815" y="602" width="3" height="1"/><rect x="819" y="602" width="1" height="1"/><rect x="821" y="602" width="4" height="1"/><rect x="792" y="603" width="1" height="1"/><rect x="794" y="603" width="3" height="1"/><rect x="798" y="603" width="1" height="1"/><rect x="800" y="603" width="1" height="1"/><rect x="803" y="603" width="1" height="1"/><rect x="805" y="603" width="3" height="1"/><rect x="810" y="603" width="4" height="1"/><rect x="815" y="603" width="3" height="1"/><rect x="819" y="603" width="3" height="1"/><rect x="824" y="603" width="1" height="1"/><rect x="792" y="604" width="3" height="1"/><rect x="796" y="604" width="3" height="1"/><rect x="800" y="604" width="4" height="1"/><rect x="805" y="604" width="7" height="1"/><rect x="813" y="604" width="1" height="1"/><rect x="815" y="604" width="3" height="1"/><rect x="819" y="604" width="2" height="1"/><rect x="824" y="604" width="1" height="1"/></g>
<g fill="#00ff00"><rect x="839" y="638" width="2" height="1"/><rect x="849" y="638" width="2" height="1"/><rect x="838" y="639" width="3" height="1"/><rect x="848" y="639" width="3" height="1"/><rect x="840" y="640" width="1" height="1"/><rect x="844" y="640" width="2" height="1"/><rect x="850" y="640" width="1" height="1"/><rect x="840" y="641" width="1" height="1"/><rect x="850" y="641" width="1" height="1"/><rect x="840" y="642" width="1" height="1"/><rect x="850" y="642" width="1" height="1"/><rect x="840" y="643" width="1" height="1"/><rect x="850" y="643" width="1" height="1"/><rect x="840" y="644" width="1" height="1"/><rect x="850" y="644" width="1" height="1"/><rect x="838" y="645" width="5" height="1"/><rect x="844" y="645" width="2" height="1"/><rect x="848" y="645" width="5" height="1"/></g>
</svg></body></html>
